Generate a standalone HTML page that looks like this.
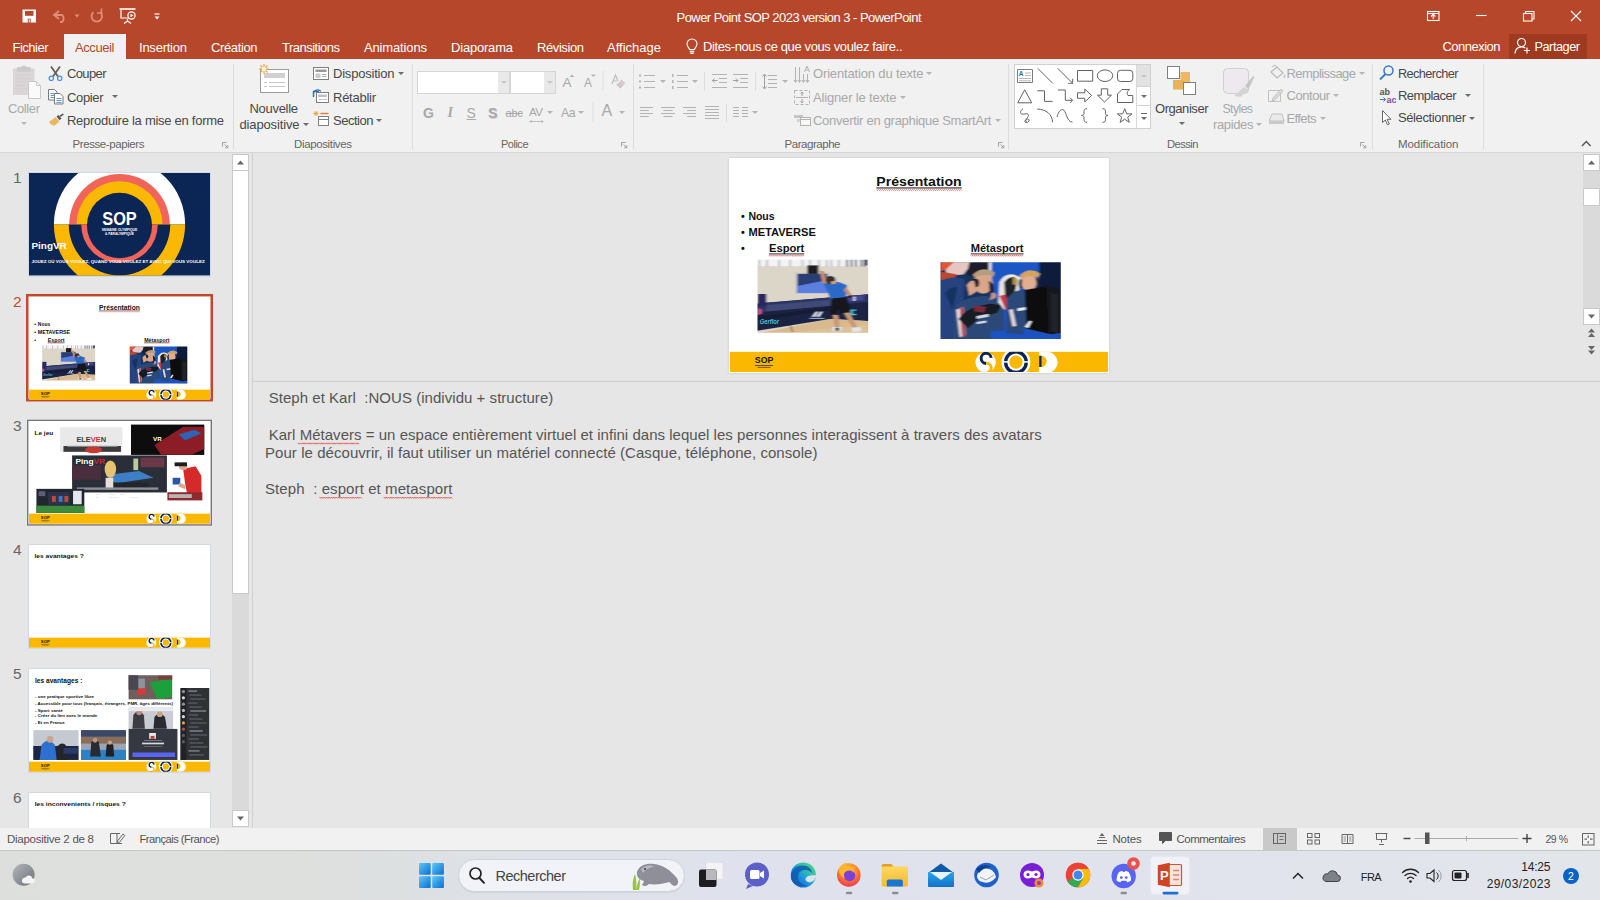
<!DOCTYPE html>
<html lang="fr">
<head>
<meta charset="utf-8">
<title>Power Point SOP 2023 version 3 - PowerPoint</title>
<style>
*{box-sizing:border-box;margin:0;padding:0}
html,body{width:1600px;height:900px;overflow:hidden;background:#e6e6e6}
body{position:relative;font-family:"Liberation Sans",sans-serif;font-size:12px;color:#444;-webkit-font-smoothing:antialiased}
.a{position:absolute;white-space:nowrap}
.t{position:absolute;white-space:nowrap;line-height:16px;height:16px}
/* ---------- title bar ---------- */
#titlebar{left:0;top:0;width:1600px;height:59px;background:#b7472a}
#titlebar .t{color:#fff}
.tab{font-size:13px;color:#fff;top:38px}
#tabsel{left:64px;top:34px;width:62px;height:26px;background:#f1f1f1}
/* ---------- ribbon ---------- */
#ribbon{left:0;top:59px;width:1600px;height:94px;background:#f1f1f1;border-bottom:1px solid #d6d6d6}
.rb{font-size:13px;color:#3b3b3b}
.rb.dis{color:#a6a6a6}
.gl{font-size:11px;color:#666}
.sep{position:absolute;top:64px;width:1px;height:86px;background:#dcdcdc}
.dd{position:absolute;width:0;height:0;border-left:3px solid transparent;border-right:3px solid transparent;border-top:3px solid #6a6a6a}
.dd.dis{border-top-color:#b5b5b5}
/* ---------- panels ---------- */
#leftpane{left:0;top:153px;width:252px;height:675px;background:#e6e6e6}
#vdiv{left:252px;top:153px;width:1px;height:675px;background:#cfcfcf}
#main{left:253px;top:153px;width:1347px;height:675px;background:#e6e6e6}
#hsplit{left:253px;top:381px;width:1347px;height:1px;background:#cdcdcd}
/* ---------- status + taskbar ---------- */
#status{left:0;top:828px;width:1600px;height:22px;background:#f1f1f1}
#status .t{font-size:11px;color:#555}
#taskbar{left:0;top:850px;width:1600px;height:50px;background:linear-gradient(90deg,#dcdfdb 0%,#dde0dc 18%,#dee1e6 30%,#dfe2ec 45%,#e0e3ec 70%,#e2e5ea 100%);border-top:1px solid #c3c7c5}
</style>
</head>
<body>
<div id="titlebar" class="a"></div>
<div id="tabsel" class="a"></div>
<div id="ribbon" class="a"></div>
<div id="leftpane" class="a"></div>
<div id="vdiv" class="a"></div>
<div id="main" class="a"></div>
<div id="hsplit" class="a"></div>
<div id="status" class="a"></div>
<div id="taskbar" class="a"></div>
<div class="a" style="left:1509px;top:34px;width:78px;height:25px;background:#9f3a21"></div>
<svg class="a" style="left:0;top:0" width="240" height="34" viewBox="0 0 240 34" fill="none" stroke="#fff" stroke-width="1.2">
<rect x="22.500" y="9.500" width="13.500" height="13" fill="#fff" stroke="none"/><rect x="25" y="11" width="8.500" height="4.800" fill="#b7472a" stroke="none"/><rect x="27.700" y="18.700" width="3" height="3.800" fill="#b7472a" stroke="none"/><rect x="28.700" y="19.500" width="1.200" height="2.200" fill="#fff" stroke="none"/>
<g stroke="#dc8f7b" stroke-width="1.8"><path d="M59 11l-5 4 5 4" /><path d="M54.5 15h7.500a4.500 4.500 0 0 1 0 7h-2"/></g>
<path d="M74.500 14.500h5l-2.500 3z" fill="#dc8f7b" stroke="none"/>
<g stroke="#dc8f7b" stroke-width="1.8"><path d="M100.200 12.200a5.300 5.300 0 1 1-6.800 0"/><path d="M101.500 8.500v4.500h-4.500" stroke-width="1.600"/></g>
<path d="M119.500 9h16" stroke-width="1.6"/><path d="M121 10v8h8"/><path d="M127.500 19v3M124 23.500l3.500-2.500 3.500 2.500"/><circle cx="131.500" cy="15.500" r="3.600" fill="#b7472a"/><path d="M130.500 13.700v3.600l3-1.800z" fill="#fff" stroke="none"/>
<path d="M154.500 14h5" stroke-width="1.200"/><path d="M154.500 16.500h5l-2.500 3z" fill="#fff" stroke="none"/>
</svg>
<svg class="a" style="left:684px;top:38px" width="16" height="18" viewBox="0 0 16 18" fill="none" stroke="#fff" stroke-width="1.1"><path d="M5.500 11.500c0-1.500-2.500-2.800-2.500-5.500a5 5 0 0 1 10 0c0 2.700-2.500 4-2.500 5.500z"/><path d="M5.800 13.500h4.400M6.300 15.300h3.400" stroke-width="1.300"/></svg>
<svg class="a" style="left:1420px;top:0" width="180" height="34" viewBox="0 0 180 34" fill="none" stroke="#fff" stroke-width="1.1">
<rect x="7.500" y="11.500" width="11.500" height="9"/><path d="M7.500 13.500h11.500" /><path d="M13.200 19v-4.500M11 16.500l2.200-2.200 2.200 2.200"/>
<path d="M56 15.500h10.500"/>
<rect x="103.500" y="13.500" width="8.500" height="7.500"/><path d="M105.500 13.500v-2h8.500v7.500h-2"/>
<path d="M151 11l10 10M161 11l-10 10"/>
</svg>
<svg class="a" style="left:1513px;top:36px" width="20" height="20" viewBox="0 0 20 20" fill="none" stroke="#fff" stroke-width="1.200"><circle cx="8.500" cy="6.500" r="4"/><path d="M1.800 17.500c.6-4 3-6.600 6.700-6.600 1.500 0 2.800.4 3.800 1.200"/><path d="M14 11.500v6M11 14.500h6"/></svg>
<div class="t" style="left:676.5px;top:9.7px;font-size:13px;letter-spacing:-0.544px;color:#fff;">Power Point SOP 2023 version 3 - PowerPoint</div>
<div class="t" style="left:12.5px;top:39.5px;font-size:13px;letter-spacing:-0.503px;color:#fff;">Fichier</div>
<div class="t" style="left:139.0px;top:39.5px;font-size:13px;letter-spacing:-0.234px;color:#fff;">Insertion</div>
<div class="t" style="left:211.0px;top:39.5px;font-size:13px;letter-spacing:-0.377px;color:#fff;">Création</div>
<div class="t" style="left:282.0px;top:39.5px;font-size:13px;letter-spacing:-0.511px;color:#fff;">Transitions</div>
<div class="t" style="left:364.0px;top:39.5px;font-size:13px;letter-spacing:-0.146px;color:#fff;">Animations</div>
<div class="t" style="left:451.0px;top:39.5px;font-size:13px;letter-spacing:-0.199px;color:#fff;">Diaporama</div>
<div class="t" style="left:537.0px;top:39.5px;font-size:13px;letter-spacing:-0.408px;color:#fff;">Révision</div>
<div class="t" style="left:607.0px;top:39.5px;font-size:13px;color:#fff;">Affichage</div>
<div class="t" style="left:75.0px;top:39.5px;font-size:13px;letter-spacing:-0.404px;color:#b7472a;">Accueil</div>
<div class="t" style="left:703.0px;top:39.3px;font-size:13px;letter-spacing:-0.380px;color:#fff;">Dites-nous ce que vous voulez faire..</div>
<div class="t" style="left:1442.5px;top:39.0px;font-size:13px;letter-spacing:-0.520px;color:#fff;">Connexion</div>
<div class="t" style="left:1534.5px;top:39.1px;font-size:12.75px;letter-spacing:-0.488px;color:#fff;">Partager</div>
<div class="sep" style="left:233px"></div>
<div class="sep" style="left:412px"></div>
<div class="sep" style="left:633px"></div>
<div class="sep" style="left:1008px"></div>
<div class="sep" style="left:1372px"></div>
<div class="sep" style="left:1483px"></div>
<div class="dd dis" style="left:21.0px;top:121.5px"></div>
<div class="dd" style="left:111.5px;top:95.0px"></div>
<div class="dd" style="left:303.0px;top:122.5px"></div>
<div class="dd" style="left:397.5px;top:72.0px"></div>
<div class="dd" style="left:376.0px;top:118.5px"></div>
<div class="dd dis" style="left:547.0px;top:110.5px"></div>
<div class="dd dis" style="left:578.0px;top:110.5px"></div>
<div class="dd dis" style="left:619.0px;top:110.5px"></div>
<div class="dd dis" style="left:659.5px;top:79.5px"></div>
<div class="dd dis" style="left:691.5px;top:79.5px"></div>
<div class="dd dis" style="left:781.5px;top:79.5px"></div>
<div class="dd dis" style="left:751.5px;top:110.5px"></div>
<div class="dd dis" style="left:926.0px;top:72.0px"></div>
<div class="dd dis" style="left:899.5px;top:95.5px"></div>
<div class="dd dis" style="left:994.5px;top:118.5px"></div>
<div class="dd" style="left:1178.5px;top:122.0px"></div>
<div class="dd dis" style="left:1256.0px;top:122.5px"></div>
<div class="dd dis" style="left:1359.0px;top:71.5px"></div>
<div class="dd dis" style="left:1333.0px;top:94.0px"></div>
<div class="dd dis" style="left:1319.5px;top:116.5px"></div>
<div class="dd" style="left:1464.5px;top:93.5px"></div>
<div class="dd" style="left:1469.0px;top:116.5px"></div>
<div class="a" style="left:417px;top:71px;width:93px;height:23px;background:#fff;border:1px solid #d5d5d5"></div>
<div class="a" style="left:498px;top:72px;width:11px;height:21px;background:#e9e9e9"></div>
<div class="a" style="left:510px;top:71px;width:46px;height:23px;background:#fff;border:1px solid #d5d5d5"></div>
<div class="a" style="left:544px;top:72px;width:11px;height:21px;background:#e9e9e9"></div>
<div class="dd dis" style="left:500.5px;top:81px;border-top-color:#c8c8c8"></div><div class="dd dis" style="left:546.5px;top:81px;border-top-color:#c8c8c8"></div>
<div class="a" style="left:1014px;top:64px;width:137px;height:65px;background:#fff;border:1px solid #d0d0d0"></div>
<div class="a" style="left:1136px;top:65px;width:14px;height:21px;background:#e2e2e2"></div>
<div class="a" style="left:1136px;top:86px;width:14px;height:1px;background:#d0d0d0"></div><div class="a" style="left:1136px;top:105px;width:14px;height:1px;background:#d0d0d0"></div><div class="a" style="left:1136px;top:65px;width:1px;height:63px;background:#d9d9d9"></div>
<div class="dd dis" style="left:1140.500px;top:74px;border-top:none;border-bottom:3px solid #c4c4c4"></div><div class="dd" style="left:1140.500px;top:94.500px"></div><div class="dd" style="left:1140.500px;top:116.500px"></div><div class="a" style="left:1140.500px;top:113px;width:6px;height:1px;background:#666"></div>
<svg class="a" style="left:0;top:59px" width="1600" height="93" viewBox="0 59 1600 93" fill="none">
<!-- Coller (disabled) -->
<path d="M13 68.500h21.500v26.500h-21.500z" fill="#dad6d7"/><path d="M17 67h13.500v4.500h-13.500z" fill="#cdc9ca"/><path d="M21.500 65.800h4.500v2.500h-4.500z" fill="#cdc9ca"/><path d="M16.500 75h14M16.500 78.500h14M16.500 82h10M16.500 85.500h10M16.500 89h10" stroke="#d0cccd" stroke-width=".8"/>
<path d="M28.500 81.500h8l4 4v13h-12z" fill="#fafafa" stroke="#c9c9c9"/><path d="M36.500 81.500v4h4" stroke="#c9c9c9"/>
<!-- Couper -->
<path d="M51 66.500l7 10M60 66.500l-7 10" stroke="#5e5e5e" stroke-width="1.700"/><circle cx="51.300" cy="78.300" r="2.200" stroke="#4b8fd6" stroke-width="1.200"/><circle cx="59.700" cy="78.300" r="2.200" stroke="#4b8fd6" stroke-width="1.200"/>
<!-- Copier -->
<path d="M48.500 89.500h6l2.500 2.500v8h-8.500z" fill="#fff" stroke="#7a7a7a"/><path d="M50.500 93.500h4M50.500 95.500h4M50.500 97.500h4" stroke="#3b78c4" stroke-width=".8"/>
<path d="M54.500 93.500h5.500l3 3v7.500h-8.500z" fill="#fff" stroke="#7a7a7a"/><path d="M56.500 98.500h5M56.500 100.500h5M56.500 102.500h5" stroke="#3b78c4" stroke-width=".8"/>
<!-- Reproduire -->
<path d="M49 122l6.500-5 4 4.500-5.500 4.500-1.500-1.500-1 .8z" fill="#e8b85c"/><path d="M56.500 116.500l2-1.500 3 3.500-2 1.700z" fill="#555"/><path d="M59.500 115.500l3.500-2 .8 1-3 2.600z" fill="#555"/>
<!-- Nouvelle diapositive -->
<rect x="260.500" y="69.500" width="28" height="23" fill="#fff" stroke="#9a9a9a"/><rect x="264" y="73" width="21" height="5" fill="#d0d0d0"/><path d="M264 82.500h3M269 82.500h16M264 86.500h3M269 86.500h16" stroke="#c6c6c6"/>
<g stroke="#eda33b" stroke-width="1.200"><path d="M264 64v10M259 69h10M260.500 65.500l7 7M267.500 65.500l-7 7"/></g><circle cx="264" cy="69" r="2.200" fill="#fff4d6"/>
<!-- Disposition -->
<rect x="313.500" y="67.500" width="15" height="12" fill="#fff" stroke="#7f7f7f"/><rect x="315.500" y="69.500" width="11" height="2.500" fill="#9a9a9a"/><rect x="315.500" y="73.500" width="5" height="4.500" fill="#c9c9c9"/><path d="M322 74.500h4.500M322 76.500h4.500" stroke="#9a9a9a" stroke-width=".8"/>
<!-- Rétablir -->
<rect x="316.500" y="92.500" width="12" height="10" fill="#fff" stroke="#7f7f7f"/><rect x="318" y="94.500" width="9" height="2.500" fill="#c2c2c2"/><path d="M319 99.500h8" stroke="#c2c2c2"/><path d="M313.500 97v-5.500h5.500" stroke="#2f6fb7" stroke-width="1.400" fill="none"/><path d="M313.800 92c2-2.500 5-2.800 7-.8" stroke="#2f6fb7" stroke-width="1.300"/>
<!-- Section -->
<g stroke="#eda33b" stroke-width="1"><path d="M316 111v5M313.500 113.500h5M314.200 111.700l3.600 3.600M317.800 111.700l-3.600 3.600"/></g>
<path d="M320.500 113.500h8" stroke="#e07c3a" stroke-width="1.4"/><rect x="318.500" y="116.500" width="10" height="9" fill="#fff" stroke="#7f7f7f"/><path d="M318.500 119.500h10" stroke="#7f7f7f"/>
<!-- A^ A˅ carets, clear format -->
<path d="M569.500 77l2.500-2.500 2.500 2.500z" fill="#b4b4b4"/><path d="M590.800 74.500l2.500 2.500 2.500-2.500z" fill="#b4b4b4"/>
<path d="M603 71v20M593 102v20" stroke="#dcdcdc"/>
<path d="M612 84l3.500-9 2.500 6M613.300 81h3.500" stroke="#b9b9b9" stroke-width="1.100"/><path d="M616.500 85l5-5.500 4 3.500-5 5.500z" fill="#d9c9cf"/><path d="M616.500 85l2-2.200 4 3.500-2 2.200z" fill="#c9c9c9"/>
<path d="M530 121.500h13M531.500 120l-1.500 1.500 1.500 1.500M541.500 120l1.500 1.500-1.500 1.500" stroke="#b4b4b4" stroke-width=".9"/>
<!-- bullets / numbering -->
<g stroke="#b3b3b3"><path d="M644 75.500h11M644 81.500h11M644 87.500h11"/><path d="M677 75.500h11M677 81.500h11M677 87.500h11"/></g>
<g fill="#b3b3b3"><rect x="639" y="74.500" width="2" height="2"/><rect x="639" y="80.500" width="2" height="2"/><rect x="639" y="86.500" width="2" height="2"/><rect x="672" y="74" width="1.500" height="3"/><rect x="672" y="80" width="1.500" height="3"/><rect x="672" y="86" width="1.500" height="3"/></g>
<path d="M704.500 72v19M755.500 72v19M726.500 104v18" stroke="#dcdcdc"/>
<!-- indents -->
<g stroke="#b3b3b3"><path d="M712 74.500h15M719 78.500h8M719 82.500h8M712 87.500h15"/><path d="M733 74.500h15M740 78.500h8M740 82.500h8M733 87.500h15"/><path d="M717.500 80.500h-5M714.500 78.500l-2 2 2 2" stroke="#a0a0a0"/><path d="M733 80.500h5M736 78.500l2 2-2 2" stroke="#a0a0a0"/></g>
<!-- line spacing -->
<g stroke="#b3b3b3"><path d="M768 75.500h9M768 79.500h9M768 83.500h9M768 87.500h9"/><path d="M764.500 74v15M762.500 76.500l2-2.500 2 2.500M762.500 86.500l2 2.500 2-2.500" stroke="#a0a0a0"/></g>
<!-- alignment -->
<g stroke="#b3b3b3"><path d="M640 107.500h13M640 110.500h9M640 113.500h13M640 116.500h9"/><path d="M661 107.500h14M663.500 110.500h9M661 113.500h14M663.500 116.500h9"/><path d="M683 107.500h13M687 110.500h9M683 113.500h13M687 116.500h9"/><path d="M705 106.500h14M705 109.500h14M705 112.500h14M705 115.500h14M705 118.500h14"/><path d="M733 107.500h6M742 107.500h6M733 110.500h6M742 110.500h6M733 113.500h6M742 113.500h6M733 116.500h6M742 116.500h6"/></g>
<!-- orientation / align text / smartart icons -->
<g stroke="#b3b3b3"><path d="M795.500 67v15M799.500 67v15M794 80l1.500 2.500 1.500-2.500M798 80l1.500 2.500 1.500-2.500"/><path d="M804.500 72l2.500-6 2.500 6M805.500 70h3M803.500 74v8M807.500 74v8M806 80l1.500 2.500 1.500-2.500M802 80l1.500 2.500 1.500-2.500"/></g>
<g stroke="#b3b3b3"><rect x="794.500" y="90.500" width="15" height="14" stroke-dasharray="3 2"/><path d="M796 97.500h12"/><path d="M802 92v4M800.500 93.500l1.500-1.500 1.500 1.500M802 99v4M800.500 101.500l1.500 1.500 1.500-1.500" stroke="#a0a0a0"/></g>
<path d="M794 115h9v3h-9z" fill="#c6c6c6"/><path d="M797 119h7v3h-7z" fill="#d4d4d4"/><rect x="800.500" y="117.500" width="10" height="8" fill="#f7f7f7" stroke="#b3b3b3"/><path d="M800.500 119.500h10" stroke="#b3b3b3"/>
<!-- shapes gallery icons -->
<g stroke="#636363" stroke-width="1" stroke-linejoin="round">
<rect x="1017.500" y="69.500" width="15" height="13" fill="#fff" stroke="#7d7d7d"/><path d="M1025 73h6M1025 75.500h6M1019 78.500h12M1019 80.800h12" stroke="#9a9a9a" stroke-width=".7"/>
<path d="M1037.700 68.300l15 15"/><path d="M1057.700 68.300l15 15M1072.700 83.300v-4.500M1072.700 83.300h-4.500"/>
<rect x="1077.500" y="70.500" width="15.200" height="10.700"/><ellipse cx="1105" cy="75.700" rx="7.700" ry="5.800"/><rect x="1117.500" y="70.300" width="15.300" height="11.200" rx="3"/>
<path d="M1024.700 89.800l7 13h-14z"/><path d="M1037.300 90.800h7.200v10.600h8.100"/><path d="M1058 90h7.300v10.300h7M1072.600 100.300l-2.600-2.600M1072.600 100.300l-2.600 2.600"/>
<path d="M1077.500 92.800h7.300v-3.800l6.800 6.500-6.800 6.500v-3.700h-7.300z"/><path d="M1101.300 88.800h6.400v6.400h3.800l-7 6.800-7-6.800h3.800z"/>
<path d="M1117.500 94l4.500-4.500h7.500c-2.500 1.500-3 4-1.500 6h4.800v7h-15.300z"/>
<path d="M1023 108.700c-2.500 2-3.500 4-1.500 5.200s5-1.200 6.500.3-1.500 4.500-2.800 6.300 1.300 2.800 3 1.500 1-3.200-.7-3-2.500 2.500-.5 3.700"/>
<path d="M1037.200 109c9 .5 15 5 15.400 13.300"/><path d="M1057 117c1-4 3-7.500 5.500-7.500 4 0 3.500 12.500 10 12.500"/>
<path d="M1087 108.700c-2.500 0-3 1-3 3v1.800c0 1.200-.8 2-2.500 2 1.700 0 2.500.8 2.500 2v1.800c0 2 .5 3 3 3"/><path d="M1102.500 108.700c2.500 0 3 1 3 3v1.800c0 1.200.8 2 2.500 2-1.700 0-2.500.8-2.500 2v1.800c0 2-.5 3-3 3"/>
<path d="M1124.700 108.700l2 5.200h5.300l-4.300 3.300 1.600 5.200-4.600-3.200-4.600 3.200 1.600-5.200-4.300-3.300h5.300z"/>
</g>
<text x="1018.700" y="76.300" font-family="Liberation Sans, sans-serif" font-size="6.500" font-weight="700" fill="#3b62b0">A</text>
<!-- Organiser -->
<rect x="1180.500" y="72" width="9.500" height="10" fill="#ecba62"/><rect x="1173" y="80" width="11" height="9.500" fill="#e9b355"/><rect x="1167.500" y="66.500" width="12" height="12" fill="#fff" stroke="#7f7f7f"/><rect x="1183.500" y="82.500" width="12" height="12" fill="#fff" stroke="#7f7f7f"/>
<!-- Styles rapides (disabled) -->
<rect x="1223.500" y="68.500" width="25" height="25" rx="4" fill="#ede9ee" stroke="#cfcfcf"/><path d="M1234 96l10-9 5 3-9 7z" fill="#d3d3d3"/><path d="M1245 86l8-10 1.500 1-6 12z" fill="#c6c6c6"/>
<!-- Remplissage / Contour / Effets icons -->
<path d="M1271 72l6-5 6 6-6 5z" stroke="#b9b9b9" stroke-width="1.200"/><path d="M1272 67l3-2 2 2" stroke="#b9b9b9"/><path d="M1284.500 74c-1.500 2-1.500 4 0 4s1.500-2 0-4z" fill="#c9c9c9"/>
<path d="M1268.500 90.500h12v11h-12z" stroke="#c2c2c2"/><path d="M1273 98l8-9 2 2-8 9-3 1z" fill="#dadada" stroke="#b9b9b9" stroke-width=".8"/>
<path d="M1269 121l3-7h10l2 7z" fill="#e9e9e9" stroke="#c0c0c0"/><path d="M1269 121h15v3h-15z" fill="#c9c9c9"/>
<!-- Rechercher / Remplacer / Sélectionner icons -->
<circle cx="1388.500" cy="70.500" r="4.500" stroke="#3b78c4" stroke-width="1.500"/><path d="M1385.500 74l-5.500 5.500" stroke="#3b78c4" stroke-width="1.800"/>
<path d="M1382.500 110.500v12l2.800-2.500 2.200 4.800 1.800-.800-2.200-4.700h3.800z" fill="#fff" stroke="#555" stroke-width=".9"/>
<path d="M1380 99.500h5.500M1383.500 97.500l2 2-2 2" stroke="#3b78c4" stroke-width="1"/>
<text x="1379.500" y="95" font-family="Liberation Sans, sans-serif" font-size="9" font-weight="700" fill="#555">ab</text>
<text x="1386.500" y="103" font-family="Liberation Sans, sans-serif" font-size="9" font-weight="700" fill="#8a4a9e">ac</text>
<!-- launchers -->
<g stroke="#9a9a9a" stroke-width=".9"><path d="M222.500 146.500v-4h4M224.500 144.500l3 3M227.800 145.200v2.600h-2.600"/><path d="M621.500 146.500v-4h4M623.500 144.500l3 3M626.800 145.200v2.600h-2.600"/><path d="M998.500 146.500v-4h4M1000.500 144.500l3 3M1003.800 145.200v2.600h-2.600"/><path d="M1360.500 146.500v-4h4M1362.500 144.500l3 3M1365.800 145.200v2.600h-2.600"/></g>
<path d="M1582 146l4.300-4.500 4.300 4.500" stroke="#555" stroke-width="1.400"/>
</svg>

<div class="t" style="left:8.0px;top:100.9px;font-size:13px;letter-spacing:-0.394px;color:#a8a8a8;">Coller</div>
<div class="t" style="left:67.0px;top:66.3px;font-size:13px;letter-spacing:-0.628px;color:#484848;">Couper</div>
<div class="t" style="left:67.0px;top:89.5px;font-size:13px;letter-spacing:-0.359px;color:#484848;">Copier</div>
<div class="t" style="left:67.0px;top:112.8px;font-size:13px;letter-spacing:-0.270px;color:#484848;">Reproduire la mise en forme</div>
<div class="t" style="left:72.5px;top:135.8px;font-size:11.5px;letter-spacing:-0.411px;color:#666;">Presse-papiers</div>
<div class="t" style="left:249.5px;top:100.9px;font-size:13px;letter-spacing:-0.299px;color:#484848;">Nouvelle</div>
<div class="t" style="left:239.5px;top:117.2px;font-size:13px;letter-spacing:-0.144px;color:#484848;">diapositive</div>
<div class="t" style="left:333.0px;top:66.3px;font-size:13px;letter-spacing:-0.209px;color:#484848;">Disposition</div>
<div class="t" style="left:333.0px;top:89.5px;font-size:13px;letter-spacing:-0.257px;color:#484848;">Rétablir</div>
<div class="t" style="left:333.0px;top:112.8px;font-size:13px;letter-spacing:-0.479px;color:#484848;">Section</div>
<div class="t" style="left:294.0px;top:135.8px;font-size:11.5px;letter-spacing:-0.364px;color:#666;">Diapositives</div>
<div class="t" style="left:501.0px;top:136.0px;font-size:11px;letter-spacing:-0.493px;color:#666;">Police</div>
<div class="t" style="left:813.0px;top:66.3px;font-size:13px;letter-spacing:-0.156px;color:#a8a8a8;">Orientation du texte</div>
<div class="t" style="left:813.0px;top:89.8px;font-size:13px;letter-spacing:-0.167px;color:#a8a8a8;">Aligner le texte</div>
<div class="t" style="left:813.0px;top:112.6px;font-size:13px;letter-spacing:-0.289px;color:#a8a8a8;">Convertir en graphique SmartArt</div>
<div class="t" style="left:784.5px;top:135.8px;font-size:11.5px;letter-spacing:-0.457px;color:#666;">Paragraphe</div>
<div class="t" style="left:1155.0px;top:100.9px;font-size:13px;letter-spacing:-0.447px;color:#484848;">Organiser</div>
<div class="t" style="left:1222.5px;top:101.2px;font-size:12.25px;letter-spacing:-0.573px;color:#a8a8a8;">Styles</div>
<div class="t" style="left:1213.0px;top:117.2px;font-size:13px;letter-spacing:-0.357px;color:#a8a8a8;">rapides</div>
<div class="t" style="left:1286.5px;top:65.8px;font-size:13px;letter-spacing:-0.566px;color:#a8a8a8;">Remplissage</div>
<div class="t" style="left:1286.5px;top:88.4px;font-size:13px;letter-spacing:-0.458px;color:#a8a8a8;">Contour</div>
<div class="t" style="left:1286.5px;top:111.0px;font-size:13px;letter-spacing:-0.603px;color:#a8a8a8;">Effets</div>
<div class="t" style="left:1167.0px;top:135.9px;font-size:11.25px;letter-spacing:-0.578px;color:#666;">Dessin</div>
<div class="t" style="left:1398.0px;top:65.7px;font-size:12.75px;letter-spacing:-0.601px;color:#484848;">Rechercher</div>
<div class="t" style="left:1398.0px;top:87.7px;font-size:13px;letter-spacing:-0.545px;color:#484848;">Remplacer</div>
<div class="t" style="left:1398.0px;top:110.4px;font-size:13px;letter-spacing:-0.389px;color:#484848;">Sélectionner</div>
<div class="t" style="left:1398.0px;top:135.8px;font-size:11.5px;letter-spacing:-0.080px;color:#666;">Modification</div>
<div class="t" style="left:423.0px;top:104.6px;font-size:14px;color:#a8a8a8;font-weight:700;">G</div>
<div class="t" style="left:447.5px;top:104.6px;font-size:14px;color:#a8a8a8;font-weight:700;font-style:italic;font-family:'Liberation Serif',serif;">I</div>
<div class="t" style="left:466.5px;top:104.6px;font-size:14px;color:#a8a8a8;text-decoration:underline;">S</div>
<div class="t" style="left:488.0px;top:104.6px;font-size:14px;color:#a8a8a8;font-weight:700;text-shadow:1px 1px 0 #d0d0d0;">S</div>
<div class="t" style="left:505.5px;top:104.7px;font-size:11px;letter-spacing:-0.125px;color:#a8a8a8;text-decoration:line-through;">abc</div>
<div class="t" style="left:529.0px;top:103.5px;font-size:11.5px;letter-spacing:-0.495px;color:#a8a8a8;">AV</div>
<div class="t" style="left:561.0px;top:105.3px;font-size:12.25px;letter-spacing:-0.489px;color:#a8a8a8;">Aa</div>
<div class="t" style="left:601.5px;top:103.0px;font-size:16px;color:#a8a8a8;">A</div>
<div class="t" style="left:562.5px;top:74.8px;font-size:13.5px;color:#a8a8a8;">A</div>
<div class="t" style="left:584.0px;top:75.3px;font-size:12px;color:#a8a8a8;">A</div>
<svg width="0" height="0" style="position:absolute"><defs><filter id="bl" x="-2%" y="-2%" width="104%" height="104%"><feGaussianBlur stdDeviation=".5"/></filter><filter id="bl2" x="-2%" y="-2%" width="104%" height="104%"><feGaussianBlur stdDeviation=".9"/></filter><clipPath id="ctop"><rect x="0" y="0" width="378" height="107"/></clipPath><clipPath id="cbar"><rect x="0" y="192.500" width="378" height="21"/></clipPath><clipPath id="cbot"><rect x="0" y="107" width="378" height="106"/></clipPath></defs></svg>
<div class="a" style="left:232px;top:154px;width:17px;height:672px;background:#dadada"></div>
<div class="a" style="left:232px;top:154px;width:17px;height:17px;background:#fff;border:1px solid #c9c9c9"></div>
<div class="a" style="left:232px;top:170px;width:17px;height:424px;background:#fff;border:1px solid #c9c9c9"></div>
<div class="a" style="left:232px;top:810px;width:17px;height:17px;background:#fff;border:1px solid #c9c9c9"></div>
<svg class="a" style="left:232px;top:154px" width="17" height="673" viewBox="0 0 17 673"><path d="M5 10.500l3.500-4 3.500 4z" fill="#666"/><path d="M5 662.500l3.500 4 3.500-4z" fill="#666"/></svg>
<div class="a" style="left:28px;top:172px;width:183px;height:104.5px;background:#fff;border:1px solid #d3d9e4"></div>
<svg class="a" style="left:29px;top:173px;" width="181" height="102.5" viewBox="0 0 378 213" preserveAspectRatio="none"><rect width="378" height="213" fill="#0b2555"/><g clip-path="url(#ctop)"><circle cx="189" cy="107" r="137" fill="#fff"/><circle cx="189" cy="107" r="105" fill="#f0645a"/><circle cx="189" cy="107" r="90" fill="#fbb800"/></g><g clip-path="url(#cbot)"><circle cx="189" cy="107" r="137" fill="#fbb800"/><circle cx="189" cy="107" r="106" fill="#0b2555"/><circle cx="189" cy="107" r="80" fill="#f0645a"/></g><circle cx="189" cy="109" r="68" fill="#0b2555"/><text x="189" y="108" font-family="Liberation Sans, sans-serif" font-size="38" font-weight="700" fill="#fff" text-anchor="middle" textLength="72" lengthAdjust="spacingAndGlyphs">SOP</text><text x="189" y="120.500" font-family="Liberation Sans, sans-serif" font-size="6.200" font-weight="700" fill="#fff" text-anchor="middle" textLength="74" lengthAdjust="spacingAndGlyphs">SEMAINE OLYMPIQUE</text><text x="189" y="129" font-family="Liberation Sans, sans-serif" font-size="6.200" font-weight="700" fill="#fff" text-anchor="middle" textLength="60" lengthAdjust="spacingAndGlyphs">&amp; PARALYMPIQUE</text><text x="5" y="158.500" font-family="Liberation Sans, sans-serif" font-size="19" font-weight="700" fill="#fff" textLength="74" lengthAdjust="spacingAndGlyphs">PingVR</text><text x="5" y="186.500" font-family="Liberation Sans, sans-serif" font-size="8.200" font-weight="700" fill="#fff" textLength="362" lengthAdjust="spacingAndGlyphs">JOUEZ OÙ VOUS VOULEZ, QUAND VOUS VOULEZ ET AVEC QUI VOUS VOULEZ</text></svg>
<svg class="a" style="left:20px;top:290px" width="200" height="116" viewBox="20 290 200 116"><rect x="27.250" y="295.200" width="184.500" height="105" fill="#fff" stroke="#c24a2a" stroke-width="2.500"/></svg>
<svg class="a" style="left:29px;top:297px;" width="181" height="102.5" viewBox="0 0 378 213" preserveAspectRatio="none"><rect width="378" height="213" fill="#fff"/><text x="146.300" y="27" font-family="Liberation Sans, sans-serif" font-size="13.400" font-weight="700" fill="#111" textLength="85.300" lengthAdjust="spacingAndGlyphs">Présentation</text><rect x="146.300" y="28.400" width="85.300" height="1" fill="#111"/><polyline points="146.3 30.5 147.3 31.5 148.3 30.5 149.3 31.5 150.3 30.5 151.3 31.5 152.3 30.5 153.3 31.5 154.3 30.5 155.3 31.5 156.3 30.5 157.3 31.5 158.3 30.5 159.3 31.5 160.3 30.5 161.3 31.5 162.3 30.5 163.3 31.5 164.3 30.5 165.3 31.5 166.3 30.5 167.3 31.5 168.3 30.5 169.3 31.5 170.3 30.5 171.3 31.5 172.3 30.5 173.3 31.5 174.3 30.5 175.3 31.5 176.3 30.5 177.3 31.5 178.3 30.5 179.3 31.5 180.3 30.5 181.3 31.5 182.3 30.5 183.3 31.5 184.3 30.5 185.3 31.5 186.3 30.5 187.3 31.5 188.3 30.5 189.3 31.5 190.3 30.5 191.3 31.5 192.3 30.5 193.3 31.5 194.3 30.5 195.3 31.5 196.3 30.5 197.3 31.5 198.3 30.5 199.3 31.5 200.3 30.5 201.3 31.5 202.3 30.5 203.3 31.5 204.3 30.5 205.3 31.5 206.3 30.5 207.3 31.5 208.3 30.5 209.3 31.5 210.3 30.5 211.3 31.5 212.3 30.5 213.3 31.5 214.3 30.5 215.3 31.5 216.3 30.5 217.3 31.5 218.3 30.5 219.3 31.5 220.3 30.5 221.3 31.5 222.3 30.5 223.3 31.5 224.3 30.5 225.3 31.5 226.3 30.5 227.3 31.5 228.3 30.5 229.3 31.5 230.3 30.5 231.3 31.5" fill="none" stroke="#e8413a" stroke-width="0.7"/><text x="11" y="60.800" font-family="Liberation Sans, sans-serif" font-size="10.700" font-weight="700" fill="#111">•</text><text x="18.400" y="60.800" font-family="Liberation Sans, sans-serif" font-size="10.700" font-weight="700" fill="#111" textLength="26.200" lengthAdjust="spacingAndGlyphs">Nous</text><text x="11" y="77" font-family="Liberation Sans, sans-serif" font-size="10.700" font-weight="700" fill="#111">•</text><text x="18.400" y="77" font-family="Liberation Sans, sans-serif" font-size="10.700" font-weight="700" fill="#111" textLength="67.400" lengthAdjust="spacingAndGlyphs">METAVERSE</text><text x="11" y="93" font-family="Liberation Sans, sans-serif" font-size="10.700" font-weight="700" fill="#111">•</text><text x="39" y="93" font-family="Liberation Sans, sans-serif" font-size="10.700" font-weight="700" fill="#111" textLength="35.300" lengthAdjust="spacingAndGlyphs">Esport</text><rect x="39" y="94.300" width="35.300" height=".9" fill="#111"/><polyline points="39.0 96.1 40.0 97.1 41.0 96.1 42.0 97.1 43.0 96.1 44.0 97.1 45.0 96.1 46.0 97.1 47.0 96.1 48.0 97.1 49.0 96.1 50.0 97.1 51.0 96.1 52.0 97.1 53.0 96.1 54.0 97.1 55.0 96.1 56.0 97.1 57.0 96.1 58.0 97.1 59.0 96.1 60.0 97.1 61.0 96.1 62.0 97.1 63.0 96.1 64.0 97.1 65.0 96.1 66.0 97.1 67.0 96.1 68.0 97.1 69.0 96.1 70.0 97.1 71.0 96.1 72.0 97.1 73.0 96.1 74.0 97.1" fill="none" stroke="#e8413a" stroke-width="0.7"/><text x="240.600" y="93" font-family="Liberation Sans, sans-serif" font-size="10.700" font-weight="700" fill="#111" textLength="52.800" lengthAdjust="spacingAndGlyphs">Métasport</text><rect x="240.600" y="94.300" width="52.800" height=".9" fill="#111"/><polyline points="240.6 96.1 241.6 97.1 242.6 96.1 243.6 97.1 244.6 96.1 245.6 97.1 246.6 96.1 247.6 97.1 248.6 96.1 249.6 97.1 250.6 96.1 251.6 97.1 252.6 96.1 253.6 97.1 254.6 96.1 255.6 97.1 256.6 96.1 257.6 97.1 258.6 96.1 259.6 97.1 260.6 96.1 261.6 97.1 262.6 96.1 263.6 97.1 264.6 96.1 265.6 97.1 266.6 96.1 267.6 97.1 268.6 96.1 269.6 97.1 270.6 96.1 271.6 97.1 272.6 96.1 273.6 97.1 274.6 96.1 275.6 97.1 276.6 96.1 277.6 97.1 278.6 96.1 279.6 97.1 280.6 96.1 281.6 97.1 282.6 96.1 283.6 97.1 284.6 96.1 285.6 97.1 286.6 96.1 287.6 97.1 288.6 96.1 289.6 97.1 290.6 96.1 291.6 97.1 292.6 96.1" fill="none" stroke="#e8413a" stroke-width="0.7"/><svg x="27.5" y="100.4" width="110.6" height="73.1" viewBox="0 0 100 100" preserveAspectRatio="none"><g filter="url(#bl2)"><rect x="-6" y="-6" width="112" height="112" fill="#dcd6c8"/><rect x="-6" y="-6" width="112" height="15" fill="#f3f3f5"/><rect x="1" y="0" width="1.2" height="9.500" fill="#a7abb3"/><rect x="8" y="0" width="1.2" height="9.500" fill="#a7abb3"/><rect x="19" y="0" width="1.2" height="9.500" fill="#a7abb3"/><rect x="29" y="0" width="1.2" height="9.500" fill="#a7abb3"/><rect x="40" y="0" width="1.2" height="9.500" fill="#a7abb3"/><rect x="47" y="0" width="1.2" height="9.500" fill="#a7abb3"/><rect x="55" y="0" width="1.2" height="9.500" fill="#a7abb3"/><rect x="62" y="0" width="1.2" height="9.500" fill="#a7abb3"/><rect x="66" y="0" width="1.2" height="9.500" fill="#a7abb3"/><rect x="73" y="0" width="1.2" height="9.500" fill="#a7abb3"/><rect x="80" y="0" width="1.8" height="9.500" fill="#6f7480"/><rect x="84" y="0" width="1.8" height="9.500" fill="#6f7480"/><rect x="88" y="0" width="1.8" height="9.500" fill="#6f7480"/><rect x="93" y="0" width="1.8" height="9.500" fill="#6f7480"/><rect x="96" y="0" width="1.8" height="9.500" fill="#6f7480"/><rect x="97" y="0" width="2.500" height="8" fill="#2b2d35"/><rect x="33.800" y="18" width="31" height="29" fill="#c9c9cb"/><rect x="36" y="19.500" width="27" height="26" fill="#2b3d74"/><path d="M36 36l27-8v17.500h-27z" fill="#5a7fe0"/><rect x="45" y="8" width="10" height="11.500" fill="#1b1c24"/><path d="M-6 60.700L106 46.700V84.500L66 81L-6 98.500z" fill="#1a2142"/><path d="M0 60L100 47.500V58L0 72z" fill="#2c3566"/><path d="M8 62l58-7v8l-58 8z" fill="#3f4877"/><rect x="0" y="47" width="8" height="16" fill="#2a2560"/><path d="M0 66l4 2v6l-4 2z" fill="#c64b8c"/><path d="M80 50.500l16-2v7l-16 2z" fill="#454690"/><rect x="86.500" y="50.500" width="2" height="6" fill="#d9d9ee"/><path d="M0 78l66-13v4l-66 14z" fill="#141a33"/><path d="M-6 103L66 81l40 3.500v22h-112z" fill="#d8ba8e"/><path d="M30 100L100 88v12z" fill="#dcc19a"/><path d="M29 88l3 11" stroke="#33261e" stroke-width=".8"/><path d="M49 78l4-7h2l-3 7zM53 78l4-7h2l-3 7z" fill="#e6ecf5"/><rect x="47" y="79.500" width="13" height="1.500" fill="#8fb5d6"/><path d="M84 68h5v2h-3v4h3v2h-5z" fill="#59c4dc"/><path d="M60 33q6-5 14-2l7 4 -1 18-14 2-3-12z" fill="#2a69c6"/><path d="M56 15l4 1 3 16-4 1z" fill="#c48d6c"/><ellipse cx="66" cy="28" rx="4.500" ry="5.500" fill="#3a2f2c"/><path d="M66 30l4-1 1 4-4 1z" fill="#d0a080"/><path d="M80 37l5 11-2 3-5-9z" fill="#c48d6c"/><rect x="82" y="49" width="3" height="3" fill="#1c1c22"/><path d="M67 53l14-2 3 22-9 1-2-8-3 10-4-1z" fill="#14151b"/><path d="M68 75l5 1 1 16-4 0z" fill="#c99874"/><path d="M78 73l5-1 7 20-4 1z" fill="#c99874"/><path d="M68 92h8v5l-8 1z" fill="#ececf2"/><path d="M85 93l8-1 1 6-8 1z" fill="#e4e6ee"/><rect x="70" y="93" width="4" height="4" fill="#555a66"/></g></svg><text x="29.712" y="165.094" font-family="Liberation Sans, sans-serif" font-size="6.9445" font-weight="700" font-style="italic" fill="#4fc0dc" textLength="19.355" lengthAdjust="spacingAndGlyphs">Gerflor</text><svg x="210.4" y="103.1" width="120.2" height="76.5" viewBox="0 0 100 100" preserveAspectRatio="none"><g filter="url(#bl2)"><rect x="-6" y="-6" width="112" height="112" fill="#16305f"/><rect x="42" y="-6" width="42" height="112" fill="#1b55c4"/><rect x="82" y="-6" width="24" height="46" fill="#0d1b3c"/><path d="M0 0h12l-6 8-6 4z" fill="#e1562b"/><path d="M11 0h16l-8 16-13 2-2-8z" fill="#e7c6c2"/><path d="M0 12l14 4-6 10-8 2z" fill="#b9482e"/><path d="M24 0h17v18l-10 4-9-6z" fill="#1b1e29"/><rect x="40" y="0" width="2.500" height="30" fill="#e4e6ea"/><path d="M-6 28q16-12 26-6l-2 84H-6z" fill="#25437f"/><path d="M4 40q4-8 10-8l-4 30z" fill="#16305f"/><path d="M12 58q8-14 26-14l14 6 2 50H10z" fill="#2a4879"/><path d="M13 62l6-4 2 36-5 4z" fill="#e9dde2"/><path d="M16 60l3-2 2 38-3 2z" fill="#b14a58"/><ellipse cx="35.500" cy="27" rx="8" ry="14" fill="#d9a68b"/><path d="M27 16q8-12 18-3l-1 6q-8-5-16 1z" fill="#b79d80"/><ellipse cx="29" cy="27" rx="3.200" ry="5.500" fill="#1b1c22"/><path d="M22 30q3-8 6-6l2 14-6 6z" fill="#d9a68b"/><path d="M43 38q4 2 3 8l-5 4z" fill="#c9967c"/><path d="M40 24q6 4 4 16l-3-2z" fill="#1b1c22"/><path d="M15 74q4-10 14-16l12-4 10 2-4 10-14 6-10 14z" fill="#191a22"/><path d="M28 56l10 2-2 8-8-2z" fill="#7a2c3c"/><path d="M30 70l10-3v4l-10 3zM30 78l8-2v3l-8 2z" fill="#d5dae6"/><path d="M49 26q4-12 12-10l6 4-4 36-10 6-5-10z" fill="#ebe6e2"/><path d="M53 26q4-8 9-6l2 4-4 28-6 2z" fill="#1f2027"/><path d="M60 20l4 2-1 8-3-1z" fill="#b8923c"/><path d="M49 44l5 18 4-2-4-18z" fill="#c9364a"/><path d="M55 48q6-14 18-12l2 50-20 4z" fill="#2a4879"/><path d="M64 60l8-2v4l-8 2z" fill="#e6eaf2"/><path d="M57 62l3 22 3-1-3-22z" fill="#ead9dc"/><ellipse cx="73.500" cy="26" rx="6.500" ry="11" fill="#e2ae90"/><path d="M66 17q8-12 17-2l-2 5q-7-4-14 1z" fill="#d6a45c"/><path d="M80 20q4 6 2 16l-3 0q2-8 0-14z" fill="#1f2027"/><path d="M66 22q-2 6 0 12l2-1q-1-5 0-10z" fill="#1f2027"/><path d="M70 36l16-4 6 4 0 60-20 2z" fill="#0b0c11"/><path d="M88 30l18 9v67H90z" fill="#15161d"/><path d="M92 40l6 2v50l-6-2z" fill="#23242c"/><path d="M42 90l28-4 22 8 8-2v8H42z" fill="#1d52c0"/><path d="M56 86l14 2-2 6-14-2z" fill="#2a4879"/><path d="M70 84l4-8 2 1-3 9z" fill="#e6eaf2"/></g></svg><rect x="0" y="192.500" width="378" height="21" fill="#fbb800"/><text x="24.800" y="203.800" font-family="Liberation Sans, sans-serif" font-size="8.600" font-weight="700" fill="#111" textLength="18.500" lengthAdjust="spacingAndGlyphs">SOP</text><rect x="25" y="205.600" width="18" height="1" fill="#333" opacity=".8"/><rect x="27.500" y="207.500" width="13" height=".9" fill="#333" opacity=".8"/><g clip-path="url(#cbar)"><circle cx="255.500" cy="203" r="10.200" fill="#fff"/><path d="M261 198.500a5 5 0 1 0-5 5.500" fill="none" stroke="#0b2555" stroke-width="3"/><path d="M256 204a4.500 4.500 0 0 1 1 9" fill="none" stroke="#fbb800" stroke-width="3"/><path d="M251 213.500h6" stroke="#f0645a" stroke-width="2"/><circle cx="285.800" cy="202.800" r="14.400" fill="#fff"/><circle cx="285.800" cy="202.800" r="12" fill="#0b2555"/><circle cx="285.800" cy="202.800" r="8.600" fill="#fff"/><circle cx="285.800" cy="202.800" r="6.600" fill="#fbb800"/><rect x="272" y="201.800" width="6" height="1.500" fill="#fff"/><rect x="293.500" y="201.800" width="6" height="1.500" fill="#fff"/><path d="M309 192.500h8a10.500 10.500 0 0 1 0 21h-8z" fill="#fff"/><path d="M311.500 196.500a5 5.500 0 0 1 0 11z" fill="#fbb800"/><path d="M309 196.500h2.500v11h-2.500z" fill="#0b2555"/></g></svg>
<svg class="a" style="left:20px;top:415px" width="200" height="116" viewBox="20 415 200 116"><rect x="27.700" y="420.400" width="183.600" height="104.500" fill="#fff" stroke="#777" stroke-width="1.400"/></svg>
<svg class="a" style="left:29px;top:421px;" width="181" height="102.5" viewBox="0 0 378 213" preserveAspectRatio="none"><rect width="378" height="213" fill="#fff"/><text x="11.500" y="29.500" font-family="Liberation Sans, sans-serif" font-size="12.500" font-weight="700" fill="#111" textLength="39" lengthAdjust="spacingAndGlyphs">Le jeu</text><g filter="url(#bl)"><rect x="65" y="13" width="130" height="51" fill="#e9e9e9"/><rect x="72" y="52" width="120" height="12" fill="#3a3a3c"/><rect x="80" y="50" width="105" height="3" fill="#d6d6d6"/><ellipse cx="135" cy="60" rx="18" ry="7" fill="#c7392f"/></g><text x="130" y="44" font-family="Liberation Sans, sans-serif" font-size="15" font-weight="700" fill="#3c3c3c" text-anchor="middle" textLength="62" lengthAdjust="spacingAndGlyphs">ELE<tspan fill="#cf2e2e">VE</tspan>N</text><g filter="url(#bl)"><rect x="213" y="7.500" width="153" height="63" fill="#0b0b0d"/><path d="M262 50l60-38h44v46l-26 12h-64z" fill="#8c1f26"/><path d="M312 28l34-10 14 8-34 14z" fill="#2f62b5"/></g><text x="259" y="42" font-family="Liberation Sans, sans-serif" font-size="13" font-weight="700" fill="#fff">VR</text><g filter="url(#bl)"><rect x="90" y="71.500" width="198" height="77" fill="#2b2e38"/><rect x="90" y="92" width="60" height="30" fill="#4a2f3e"/><rect x="233" y="76" width="50" height="20" fill="#6b3848"/><path d="M160 112l70-8 30 14-80 12z" fill="#3d7fc6"/><path d="M170 128h80v16h-80z" fill="#23252c"/><ellipse cx="170" cy="100" rx="12" ry="18" fill="#e5c36f"/><path d="M160 118h16v24h-16z" fill="#e8e0d8"/><rect x="218" y="78" width="10" height="24" fill="#b9c9a0"/><rect x="100" y="138" width="170" height="5" fill="#8d8f98"/></g><text x="97" y="90" font-family="Liberation Sans, sans-serif" font-size="15" font-weight="700" fill="#fff" textLength="62" lengthAdjust="spacingAndGlyphs">Ping<tspan fill="#d3262b">VR</tspan></text><g filter="url(#bl)"><rect x="289" y="83" width="73" height="82" fill="#fff"/><path d="M322 100l26-6 12 20 0 36h-30l-4-20z" fill="#d42b2b"/><ellipse cx="322" cy="94" rx="9" ry="8" fill="#d9a98c"/><path d="M304 86h26v8h-26z" fill="#1c1c22"/><path d="M300 118h16v14h-16z" fill="#2a55a8"/><path d="M314 128l14 6-2 8-14-6z" fill="#d9a98c"/><rect x="289" y="148" width="73" height="17" fill="#8e2a2e"/><rect x="292" y="152" width="48" height="8" fill="#b8b2b2"/></g><g filter="url(#bl)"><rect x="15.500" y="141" width="100" height="50" fill="#23262f"/><rect x="15.500" y="176" width="100" height="15" fill="#3c8c3c"/><rect x="40" y="148" width="45" height="26" fill="#2d3350"/><rect x="92" y="145" width="18" height="28" fill="#e4e6ee"/><rect x="48" y="156" width="8" height="12" fill="#c24a3a"/><rect x="62" y="156" width="8" height="12" fill="#3f78c6"/><rect x="74" y="156" width="8" height="12" fill="#c24a3a"/><rect x="20" y="146" width="14" height="10" fill="#5a5f7a"/></g><g fill="#d5d5d5"><rect x="140" y="152" width="8" height="1"/><rect x="166" y="152" width="14" height="1"/><rect x="190" y="152" width="10" height="1"/><rect x="140" y="158" width="6" height="1"/><rect x="166" y="158" width="22" height="1"/><rect x="210" y="158" width="18" height="1"/></g><rect x="0" y="192.500" width="378" height="21" fill="#fbb800"/><text x="24.800" y="203.800" font-family="Liberation Sans, sans-serif" font-size="8.600" font-weight="700" fill="#111" textLength="18.500" lengthAdjust="spacingAndGlyphs">SOP</text><rect x="25" y="205.600" width="18" height="1" fill="#333" opacity=".8"/><rect x="27.500" y="207.500" width="13" height=".9" fill="#333" opacity=".8"/><g clip-path="url(#cbar)"><circle cx="255.500" cy="203" r="10.200" fill="#fff"/><path d="M261 198.500a5 5 0 1 0-5 5.500" fill="none" stroke="#0b2555" stroke-width="3"/><path d="M256 204a4.500 4.500 0 0 1 1 9" fill="none" stroke="#fbb800" stroke-width="3"/><path d="M251 213.500h6" stroke="#f0645a" stroke-width="2"/><circle cx="285.800" cy="202.800" r="14.400" fill="#fff"/><circle cx="285.800" cy="202.800" r="12" fill="#0b2555"/><circle cx="285.800" cy="202.800" r="8.600" fill="#fff"/><circle cx="285.800" cy="202.800" r="6.600" fill="#fbb800"/><rect x="272" y="201.800" width="6" height="1.500" fill="#fff"/><rect x="293.500" y="201.800" width="6" height="1.500" fill="#fff"/><path d="M309 192.500h8a10.500 10.500 0 0 1 0 21h-8z" fill="#fff"/><path d="M311.500 196.500a5 5.500 0 0 1 0 11z" fill="#fbb800"/><path d="M309 196.500h2.500v11h-2.500z" fill="#0b2555"/></g></svg>
<div class="a" style="left:28px;top:544px;width:183px;height:104.5px;background:#fff;border:1px solid #d3d9e4"></div>
<svg class="a" style="left:29px;top:545px;" width="181" height="102.5" viewBox="0 0 378 213" preserveAspectRatio="none"><rect width="378" height="213" fill="#fff"/><text x="11.500" y="28" font-family="Liberation Sans, sans-serif" font-size="12.500" font-weight="700" fill="#111" textLength="103" lengthAdjust="spacingAndGlyphs">les avantages ?</text><rect x="0" y="192.500" width="378" height="21" fill="#fbb800"/><text x="24.800" y="203.800" font-family="Liberation Sans, sans-serif" font-size="8.600" font-weight="700" fill="#111" textLength="18.500" lengthAdjust="spacingAndGlyphs">SOP</text><rect x="25" y="205.600" width="18" height="1" fill="#333" opacity=".8"/><rect x="27.500" y="207.500" width="13" height=".9" fill="#333" opacity=".8"/><g clip-path="url(#cbar)"><circle cx="255.500" cy="203" r="10.200" fill="#fff"/><path d="M261 198.500a5 5 0 1 0-5 5.500" fill="none" stroke="#0b2555" stroke-width="3"/><path d="M256 204a4.500 4.500 0 0 1 1 9" fill="none" stroke="#fbb800" stroke-width="3"/><path d="M251 213.500h6" stroke="#f0645a" stroke-width="2"/><circle cx="285.800" cy="202.800" r="14.400" fill="#fff"/><circle cx="285.800" cy="202.800" r="12" fill="#0b2555"/><circle cx="285.800" cy="202.800" r="8.600" fill="#fff"/><circle cx="285.800" cy="202.800" r="6.600" fill="#fbb800"/><rect x="272" y="201.800" width="6" height="1.500" fill="#fff"/><rect x="293.500" y="201.800" width="6" height="1.500" fill="#fff"/><path d="M309 192.500h8a10.500 10.500 0 0 1 0 21h-8z" fill="#fff"/><path d="M311.500 196.500a5 5.500 0 0 1 0 11z" fill="#fbb800"/><path d="M309 196.500h2.500v11h-2.500z" fill="#0b2555"/></g></svg>
<div class="a" style="left:28px;top:668px;width:183px;height:104.5px;background:#fff;border:1px solid #d3d9e4"></div>
<svg class="a" style="left:29px;top:669px;" width="181" height="102.5" viewBox="0 0 378 213" preserveAspectRatio="none"><rect width="378" height="213" fill="#fff"/><text x="12.500" y="29" font-family="Liberation Sans, sans-serif" font-size="13.500" font-weight="700" fill="#111" textLength="99" lengthAdjust="spacingAndGlyphs">les avantages :</text><text x="12.500" y="61" font-family="Liberation Sans, sans-serif" font-size="7.300" font-weight="700" fill="#111" textLength="123" lengthAdjust="spacingAndGlyphs">- une pratique sportive libre</text><text x="12.500" y="74.5" font-family="Liberation Sans, sans-serif" font-size="7.300" font-weight="700" fill="#111" textLength="288" lengthAdjust="spacingAndGlyphs">- Accessible pour tous (français, étrangers, PMR, âges différents)</text><text x="12.500" y="88.5" font-family="Liberation Sans, sans-serif" font-size="7.300" font-weight="700" fill="#111" textLength="58" lengthAdjust="spacingAndGlyphs">- Sport santé</text><text x="12.500" y="100.5" font-family="Liberation Sans, sans-serif" font-size="7.300" font-weight="700" fill="#111" textLength="130" lengthAdjust="spacingAndGlyphs">- Créer du lien avec le monde</text><text x="12.500" y="114" font-family="Liberation Sans, sans-serif" font-size="7.300" font-weight="700" fill="#111" textLength="62" lengthAdjust="spacingAndGlyphs">- Et en France</text><g filter="url(#bl)"><rect x="208" y="13" width="91" height="50" fill="#6d5f5c"/><path d="M252 28l46-8v38l-30 5z" fill="#1fa03a"/><rect x="226" y="40" width="18" height="14" fill="#d23a3a"/><rect x="228" y="20" width="14" height="20" fill="#8f949c"/><rect x="208" y="13" width="20" height="30" fill="#4a4650"/><rect x="270" y="14" width="29" height="8" fill="#7a3c3a"/><rect x="208" y="79.500" width="93" height="45" fill="#c9ccd3"/><path d="M218 96q10-16 22 0l2 28h-26z" fill="#3b3d42"/><path d="M262 100q10-14 22 0l4 24h-28z" fill="#2a2b30"/><circle cx="230" cy="90" r="6" fill="#b98f78"/><circle cx="273" cy="94" r="6" fill="#caa58c"/><rect x="208" y="79.500" width="93" height="8" fill="#e8eaee"/><rect x="208" y="124.500" width="102" height="64.500" fill="#36393f"/><rect x="216" y="173.500" width="89" height="9.500" rx="1" fill="#5865f2"/><rect x="251" y="133" width="14" height="12" fill="#e9e9ee"/><rect x="254" y="139" width="8" height="6" fill="#c23b3b"/><rect x="236" y="153" width="46" height="3.500" fill="#d7d9dd"/><rect x="240" y="148" width="38" height="1.500" fill="#8a8d93"/><rect x="240" y="160" width="38" height="1.500" fill="#74777d"/><rect x="316.500" y="39.500" width="60" height="149.500" fill="#2f3136"/><rect x="316.500" y="39.500" width="12" height="149.500" fill="#202225"/><circle cx="322.500" cy="47" r="3.300" fill="#8e9297"/><circle cx="322.500" cy="60" r="3.300" fill="#d9dadc"/><circle cx="322.500" cy="73" r="3.300" fill="#8e9297"/><circle cx="322.500" cy="86" r="3.300" fill="#b9bbbe"/><circle cx="322.500" cy="99" r="3.300" fill="#d9dadc"/><circle cx="322.500" cy="112" r="3.300" fill="#e8a23a"/><circle cx="322.500" cy="125" r="3.300" fill="#c24a4a"/><circle cx="322.500" cy="138" r="3.300" fill="#5a5d63"/><circle cx="322.500" cy="151" r="3.300" fill="#5a5d63"/><rect x="333" y="45" width="18" height="1.600" fill="#c9cbcf"/><rect x="335" y="53.3" width="25" height="1.600" fill="#7b7e85"/><rect x="337" y="61.6" width="32" height="1.600" fill="#7b7e85"/><rect x="333" y="69.9" width="19" height="1.600" fill="#7b7e85"/><rect x="335" y="78.2" width="26" height="1.600" fill="#7b7e85"/><rect x="337" y="86.5" width="33" height="1.600" fill="#c9cbcf"/><rect x="333" y="94.8" width="20" height="1.600" fill="#7b7e85"/><rect x="335" y="103.1" width="27" height="1.600" fill="#7b7e85"/><rect x="337" y="111.4" width="34" height="1.600" fill="#7b7e85"/><rect x="333" y="119.7" width="21" height="1.600" fill="#7b7e85"/><rect x="335" y="128" width="28" height="1.600" fill="#c9cbcf"/><rect x="337" y="136.3" width="35" height="1.600" fill="#7b7e85"/><rect x="333" y="144.6" width="22" height="1.600" fill="#7b7e85"/><rect x="335" y="152.9" width="29" height="1.600" fill="#7b7e85"/><rect x="337" y="161.2" width="36" height="1.600" fill="#7b7e85"/><rect x="333" y="169.5" width="23" height="1.600" fill="#c9cbcf"/><rect x="335" y="177.8" width="30" height="1.600" fill="#7b7e85"/><rect x="9" y="127" width="94.500" height="62" fill="#c5c9d2"/><rect x="9" y="160" width="94.500" height="29" fill="#1d2742"/><path d="M26 158q14-18 28 0l4 31h-36z" fill="#2d6fd0"/><circle cx="44" cy="146" r="7" fill="#c9a58f"/><path d="M60 160q10-10 18 0l2 29h-22z" fill="#23252c"/><rect x="72" y="164" width="30" height="12" fill="#2a3a6a"/><rect x="108.500" y="127" width="94" height="62" fill="#9aa5b5"/><rect x="108.500" y="127" width="94" height="14" fill="#3a4a66"/><rect x="108.500" y="141" width="94" height="14" fill="#8a6e58"/><rect x="108.500" y="168" width="94" height="21" fill="#2f7fc4"/><path d="M130 152q8-10 16 0l4 30h-22z" fill="#2a2a30"/><path d="M162 158q8-8 14 0l2 24h-18z" fill="#1f2026"/><circle cx="138" cy="148" r="5" fill="#b99880"/><circle cx="169" cy="153" r="4.500" fill="#c4a38b"/></g><rect x="0" y="192.500" width="378" height="21" fill="#fbb800"/><text x="24.800" y="203.800" font-family="Liberation Sans, sans-serif" font-size="8.600" font-weight="700" fill="#111" textLength="18.500" lengthAdjust="spacingAndGlyphs">SOP</text><rect x="25" y="205.600" width="18" height="1" fill="#333" opacity=".8"/><rect x="27.500" y="207.500" width="13" height=".9" fill="#333" opacity=".8"/><g clip-path="url(#cbar)"><circle cx="255.500" cy="203" r="10.200" fill="#fff"/><path d="M261 198.500a5 5 0 1 0-5 5.500" fill="none" stroke="#0b2555" stroke-width="3"/><path d="M256 204a4.500 4.500 0 0 1 1 9" fill="none" stroke="#fbb800" stroke-width="3"/><path d="M251 213.500h6" stroke="#f0645a" stroke-width="2"/><circle cx="285.800" cy="202.800" r="14.400" fill="#fff"/><circle cx="285.800" cy="202.800" r="12" fill="#0b2555"/><circle cx="285.800" cy="202.800" r="8.600" fill="#fff"/><circle cx="285.800" cy="202.800" r="6.600" fill="#fbb800"/><rect x="272" y="201.800" width="6" height="1.500" fill="#fff"/><rect x="293.500" y="201.800" width="6" height="1.500" fill="#fff"/><path d="M309 192.500h8a10.500 10.500 0 0 1 0 21h-8z" fill="#fff"/><path d="M311.500 196.500a5 5.500 0 0 1 0 11z" fill="#fbb800"/><path d="M309 196.500h2.500v11h-2.500z" fill="#0b2555"/></g></svg>
<div class="a" style="left:28px;top:792px;width:183px;height:36px;background:#fff;border:1px solid #d3d9e4"></div>
<svg class="a" style="left:29px;top:793px;" width="181" height="35" viewBox="0 0 378 72.7317" preserveAspectRatio="none"><rect width="378" height="213" fill="#fff"/><text x="12" y="27.500" font-family="Liberation Sans, sans-serif" font-size="12.500" font-weight="700" fill="#111" textLength="190" lengthAdjust="spacingAndGlyphs">les inconvenients / risques ?</text></svg>
<div class="t" style="left:13.0px;top:170.0px;font-size:15.5px;color:#666;">1</div>
<div class="t" style="left:13.0px;top:294.0px;font-size:15.5px;color:#c9482b;">2</div>
<div class="t" style="left:13.0px;top:418.0px;font-size:15.5px;color:#666;">3</div>
<div class="t" style="left:13.0px;top:542.0px;font-size:15.5px;color:#666;">4</div>
<div class="t" style="left:13.0px;top:666.0px;font-size:15.5px;color:#666;">5</div>
<div class="t" style="left:13.0px;top:790.0px;font-size:15.5px;color:#666;">6</div>
<div class="a" style="left:729px;top:158px;width:380px;height:215px;background:#fff;box-shadow:0 0 2px rgba(0,0,0,.18)"></div>
<svg class="a" style="left:729.7px;top:158.8px;" width="378.2" height="213.4" viewBox="0 0 378 213" preserveAspectRatio="none"><rect width="378" height="213" fill="#fff"/><text x="146.300" y="27" font-family="Liberation Sans, sans-serif" font-size="13.400" font-weight="700" fill="#111" textLength="85.300" lengthAdjust="spacingAndGlyphs">Présentation</text><rect x="146.300" y="28.400" width="85.300" height="1" fill="#111"/><polyline points="146.3 30.5 147.3 31.5 148.3 30.5 149.3 31.5 150.3 30.5 151.3 31.5 152.3 30.5 153.3 31.5 154.3 30.5 155.3 31.5 156.3 30.5 157.3 31.5 158.3 30.5 159.3 31.5 160.3 30.5 161.3 31.5 162.3 30.5 163.3 31.5 164.3 30.5 165.3 31.5 166.3 30.5 167.3 31.5 168.3 30.5 169.3 31.5 170.3 30.5 171.3 31.5 172.3 30.5 173.3 31.5 174.3 30.5 175.3 31.5 176.3 30.5 177.3 31.5 178.3 30.5 179.3 31.5 180.3 30.5 181.3 31.5 182.3 30.5 183.3 31.5 184.3 30.5 185.3 31.5 186.3 30.5 187.3 31.5 188.3 30.5 189.3 31.5 190.3 30.5 191.3 31.5 192.3 30.5 193.3 31.5 194.3 30.5 195.3 31.5 196.3 30.5 197.3 31.5 198.3 30.5 199.3 31.5 200.3 30.5 201.3 31.5 202.3 30.5 203.3 31.5 204.3 30.5 205.3 31.5 206.3 30.5 207.3 31.5 208.3 30.5 209.3 31.5 210.3 30.5 211.3 31.5 212.3 30.5 213.3 31.5 214.3 30.5 215.3 31.5 216.3 30.5 217.3 31.5 218.3 30.5 219.3 31.5 220.3 30.5 221.3 31.5 222.3 30.5 223.3 31.5 224.3 30.5 225.3 31.5 226.3 30.5 227.3 31.5 228.3 30.5 229.3 31.5 230.3 30.5 231.3 31.5" fill="none" stroke="#e8413a" stroke-width="0.7"/><text x="11" y="60.800" font-family="Liberation Sans, sans-serif" font-size="10.700" font-weight="700" fill="#111">•</text><text x="18.400" y="60.800" font-family="Liberation Sans, sans-serif" font-size="10.700" font-weight="700" fill="#111" textLength="26.200" lengthAdjust="spacingAndGlyphs">Nous</text><text x="11" y="77" font-family="Liberation Sans, sans-serif" font-size="10.700" font-weight="700" fill="#111">•</text><text x="18.400" y="77" font-family="Liberation Sans, sans-serif" font-size="10.700" font-weight="700" fill="#111" textLength="67.400" lengthAdjust="spacingAndGlyphs">METAVERSE</text><text x="11" y="93" font-family="Liberation Sans, sans-serif" font-size="10.700" font-weight="700" fill="#111">•</text><text x="39" y="93" font-family="Liberation Sans, sans-serif" font-size="10.700" font-weight="700" fill="#111" textLength="35.300" lengthAdjust="spacingAndGlyphs">Esport</text><rect x="39" y="94.300" width="35.300" height=".9" fill="#111"/><polyline points="39.0 96.1 40.0 97.1 41.0 96.1 42.0 97.1 43.0 96.1 44.0 97.1 45.0 96.1 46.0 97.1 47.0 96.1 48.0 97.1 49.0 96.1 50.0 97.1 51.0 96.1 52.0 97.1 53.0 96.1 54.0 97.1 55.0 96.1 56.0 97.1 57.0 96.1 58.0 97.1 59.0 96.1 60.0 97.1 61.0 96.1 62.0 97.1 63.0 96.1 64.0 97.1 65.0 96.1 66.0 97.1 67.0 96.1 68.0 97.1 69.0 96.1 70.0 97.1 71.0 96.1 72.0 97.1 73.0 96.1 74.0 97.1" fill="none" stroke="#e8413a" stroke-width="0.7"/><text x="240.600" y="93" font-family="Liberation Sans, sans-serif" font-size="10.700" font-weight="700" fill="#111" textLength="52.800" lengthAdjust="spacingAndGlyphs">Métasport</text><rect x="240.600" y="94.300" width="52.800" height=".9" fill="#111"/><polyline points="240.6 96.1 241.6 97.1 242.6 96.1 243.6 97.1 244.6 96.1 245.6 97.1 246.6 96.1 247.6 97.1 248.6 96.1 249.6 97.1 250.6 96.1 251.6 97.1 252.6 96.1 253.6 97.1 254.6 96.1 255.6 97.1 256.6 96.1 257.6 97.1 258.6 96.1 259.6 97.1 260.6 96.1 261.6 97.1 262.6 96.1 263.6 97.1 264.6 96.1 265.6 97.1 266.6 96.1 267.6 97.1 268.6 96.1 269.6 97.1 270.6 96.1 271.6 97.1 272.6 96.1 273.6 97.1 274.6 96.1 275.6 97.1 276.6 96.1 277.6 97.1 278.6 96.1 279.6 97.1 280.6 96.1 281.6 97.1 282.6 96.1 283.6 97.1 284.6 96.1 285.6 97.1 286.6 96.1 287.6 97.1 288.6 96.1 289.6 97.1 290.6 96.1 291.6 97.1 292.6 96.1" fill="none" stroke="#e8413a" stroke-width="0.7"/><svg x="27.5" y="100.4" width="110.6" height="73.1" viewBox="0 0 100 100" preserveAspectRatio="none"><g filter="url(#bl2)"><rect x="-6" y="-6" width="112" height="112" fill="#dcd6c8"/><rect x="-6" y="-6" width="112" height="15" fill="#f3f3f5"/><rect x="1" y="0" width="1.2" height="9.500" fill="#a7abb3"/><rect x="8" y="0" width="1.2" height="9.500" fill="#a7abb3"/><rect x="19" y="0" width="1.2" height="9.500" fill="#a7abb3"/><rect x="29" y="0" width="1.2" height="9.500" fill="#a7abb3"/><rect x="40" y="0" width="1.2" height="9.500" fill="#a7abb3"/><rect x="47" y="0" width="1.2" height="9.500" fill="#a7abb3"/><rect x="55" y="0" width="1.2" height="9.500" fill="#a7abb3"/><rect x="62" y="0" width="1.2" height="9.500" fill="#a7abb3"/><rect x="66" y="0" width="1.2" height="9.500" fill="#a7abb3"/><rect x="73" y="0" width="1.2" height="9.500" fill="#a7abb3"/><rect x="80" y="0" width="1.8" height="9.500" fill="#6f7480"/><rect x="84" y="0" width="1.8" height="9.500" fill="#6f7480"/><rect x="88" y="0" width="1.8" height="9.500" fill="#6f7480"/><rect x="93" y="0" width="1.8" height="9.500" fill="#6f7480"/><rect x="96" y="0" width="1.8" height="9.500" fill="#6f7480"/><rect x="97" y="0" width="2.500" height="8" fill="#2b2d35"/><rect x="33.800" y="18" width="31" height="29" fill="#c9c9cb"/><rect x="36" y="19.500" width="27" height="26" fill="#2b3d74"/><path d="M36 36l27-8v17.500h-27z" fill="#5a7fe0"/><rect x="45" y="8" width="10" height="11.500" fill="#1b1c24"/><path d="M-6 60.700L106 46.700V84.500L66 81L-6 98.500z" fill="#1a2142"/><path d="M0 60L100 47.500V58L0 72z" fill="#2c3566"/><path d="M8 62l58-7v8l-58 8z" fill="#3f4877"/><rect x="0" y="47" width="8" height="16" fill="#2a2560"/><path d="M0 66l4 2v6l-4 2z" fill="#c64b8c"/><path d="M80 50.500l16-2v7l-16 2z" fill="#454690"/><rect x="86.500" y="50.500" width="2" height="6" fill="#d9d9ee"/><path d="M0 78l66-13v4l-66 14z" fill="#141a33"/><path d="M-6 103L66 81l40 3.500v22h-112z" fill="#d8ba8e"/><path d="M30 100L100 88v12z" fill="#dcc19a"/><path d="M29 88l3 11" stroke="#33261e" stroke-width=".8"/><path d="M49 78l4-7h2l-3 7zM53 78l4-7h2l-3 7z" fill="#e6ecf5"/><rect x="47" y="79.500" width="13" height="1.500" fill="#8fb5d6"/><path d="M84 68h5v2h-3v4h3v2h-5z" fill="#59c4dc"/><path d="M60 33q6-5 14-2l7 4 -1 18-14 2-3-12z" fill="#2a69c6"/><path d="M56 15l4 1 3 16-4 1z" fill="#c48d6c"/><ellipse cx="66" cy="28" rx="4.500" ry="5.500" fill="#3a2f2c"/><path d="M66 30l4-1 1 4-4 1z" fill="#d0a080"/><path d="M80 37l5 11-2 3-5-9z" fill="#c48d6c"/><rect x="82" y="49" width="3" height="3" fill="#1c1c22"/><path d="M67 53l14-2 3 22-9 1-2-8-3 10-4-1z" fill="#14151b"/><path d="M68 75l5 1 1 16-4 0z" fill="#c99874"/><path d="M78 73l5-1 7 20-4 1z" fill="#c99874"/><path d="M68 92h8v5l-8 1z" fill="#ececf2"/><path d="M85 93l8-1 1 6-8 1z" fill="#e4e6ee"/><rect x="70" y="93" width="4" height="4" fill="#555a66"/></g></svg><text x="29.712" y="165.094" font-family="Liberation Sans, sans-serif" font-size="6.9445" font-weight="700" font-style="italic" fill="#4fc0dc" textLength="19.355" lengthAdjust="spacingAndGlyphs">Gerflor</text><svg x="210.4" y="103.1" width="120.2" height="76.5" viewBox="0 0 100 100" preserveAspectRatio="none"><g filter="url(#bl2)"><rect x="-6" y="-6" width="112" height="112" fill="#16305f"/><rect x="42" y="-6" width="42" height="112" fill="#1b55c4"/><rect x="82" y="-6" width="24" height="46" fill="#0d1b3c"/><path d="M0 0h12l-6 8-6 4z" fill="#e1562b"/><path d="M11 0h16l-8 16-13 2-2-8z" fill="#e7c6c2"/><path d="M0 12l14 4-6 10-8 2z" fill="#b9482e"/><path d="M24 0h17v18l-10 4-9-6z" fill="#1b1e29"/><rect x="40" y="0" width="2.500" height="30" fill="#e4e6ea"/><path d="M-6 28q16-12 26-6l-2 84H-6z" fill="#25437f"/><path d="M4 40q4-8 10-8l-4 30z" fill="#16305f"/><path d="M12 58q8-14 26-14l14 6 2 50H10z" fill="#2a4879"/><path d="M13 62l6-4 2 36-5 4z" fill="#e9dde2"/><path d="M16 60l3-2 2 38-3 2z" fill="#b14a58"/><ellipse cx="35.500" cy="27" rx="8" ry="14" fill="#d9a68b"/><path d="M27 16q8-12 18-3l-1 6q-8-5-16 1z" fill="#b79d80"/><ellipse cx="29" cy="27" rx="3.200" ry="5.500" fill="#1b1c22"/><path d="M22 30q3-8 6-6l2 14-6 6z" fill="#d9a68b"/><path d="M43 38q4 2 3 8l-5 4z" fill="#c9967c"/><path d="M40 24q6 4 4 16l-3-2z" fill="#1b1c22"/><path d="M15 74q4-10 14-16l12-4 10 2-4 10-14 6-10 14z" fill="#191a22"/><path d="M28 56l10 2-2 8-8-2z" fill="#7a2c3c"/><path d="M30 70l10-3v4l-10 3zM30 78l8-2v3l-8 2z" fill="#d5dae6"/><path d="M49 26q4-12 12-10l6 4-4 36-10 6-5-10z" fill="#ebe6e2"/><path d="M53 26q4-8 9-6l2 4-4 28-6 2z" fill="#1f2027"/><path d="M60 20l4 2-1 8-3-1z" fill="#b8923c"/><path d="M49 44l5 18 4-2-4-18z" fill="#c9364a"/><path d="M55 48q6-14 18-12l2 50-20 4z" fill="#2a4879"/><path d="M64 60l8-2v4l-8 2z" fill="#e6eaf2"/><path d="M57 62l3 22 3-1-3-22z" fill="#ead9dc"/><ellipse cx="73.500" cy="26" rx="6.500" ry="11" fill="#e2ae90"/><path d="M66 17q8-12 17-2l-2 5q-7-4-14 1z" fill="#d6a45c"/><path d="M80 20q4 6 2 16l-3 0q2-8 0-14z" fill="#1f2027"/><path d="M66 22q-2 6 0 12l2-1q-1-5 0-10z" fill="#1f2027"/><path d="M70 36l16-4 6 4 0 60-20 2z" fill="#0b0c11"/><path d="M88 30l18 9v67H90z" fill="#15161d"/><path d="M92 40l6 2v50l-6-2z" fill="#23242c"/><path d="M42 90l28-4 22 8 8-2v8H42z" fill="#1d52c0"/><path d="M56 86l14 2-2 6-14-2z" fill="#2a4879"/><path d="M70 84l4-8 2 1-3 9z" fill="#e6eaf2"/></g></svg><rect x="0" y="192.500" width="378" height="21" fill="#fbb800"/><text x="24.800" y="203.800" font-family="Liberation Sans, sans-serif" font-size="8.600" font-weight="700" fill="#111" textLength="18.500" lengthAdjust="spacingAndGlyphs">SOP</text><rect x="25" y="205.600" width="18" height="1" fill="#333" opacity=".8"/><rect x="27.500" y="207.500" width="13" height=".9" fill="#333" opacity=".8"/><g clip-path="url(#cbar)"><circle cx="255.500" cy="203" r="10.200" fill="#fff"/><path d="M261 198.500a5 5 0 1 0-5 5.500" fill="none" stroke="#0b2555" stroke-width="3"/><path d="M256 204a4.500 4.500 0 0 1 1 9" fill="none" stroke="#fbb800" stroke-width="3"/><path d="M251 213.500h6" stroke="#f0645a" stroke-width="2"/><circle cx="285.800" cy="202.800" r="14.400" fill="#fff"/><circle cx="285.800" cy="202.800" r="12" fill="#0b2555"/><circle cx="285.800" cy="202.800" r="8.600" fill="#fff"/><circle cx="285.800" cy="202.800" r="6.600" fill="#fbb800"/><rect x="272" y="201.800" width="6" height="1.500" fill="#fff"/><rect x="293.500" y="201.800" width="6" height="1.500" fill="#fff"/><path d="M309 192.500h8a10.500 10.500 0 0 1 0 21h-8z" fill="#fff"/><path d="M311.500 196.500a5 5.500 0 0 1 0 11z" fill="#fbb800"/><path d="M309 196.500h2.500v11h-2.500z" fill="#0b2555"/></g></svg>
<div class="a" style="left:1583px;top:154px;width:17px;height:171px;background:#dadada"></div>
<div class="a" style="left:1583px;top:154px;width:17px;height:17px;background:#fff;border:1px solid #c9c9c9"></div>
<div class="a" style="left:1583px;top:188px;width:17px;height:18px;background:#fff;border:1px solid #c9c9c9"></div>
<div class="a" style="left:1583px;top:308px;width:17px;height:17px;background:#fff;border:1px solid #c9c9c9"></div>
<svg class="a" style="left:1583px;top:154px" width="17" height="210" viewBox="0 0 17 210"><g fill="#666"><path d="M5 10.500l3.500-4 3.500 4z"/><path d="M5 160.500l3.500 4 3.500-4z"/><path d="M5 178.500l3.500-4 3.500 4zM5 183l3.500-4 3.500 4z"/><path d="M5 192l3.500 4 3.500-4zM5 196.500l3.500 4 3.500-4z"/></g></svg>
<svg class="a" style="left:0;top:0" width="1600" height="520" viewBox="0 0 1600 520"><polyline points="298.0 442.8 299.2 444.2 300.4 442.8 301.6 444.2 302.8 442.8 304.0 444.2 305.2 442.8 306.4 444.2 307.6 442.8 308.8 444.2 310.0 442.8 311.2 444.2 312.4 442.8 313.6 444.2 314.8 442.8 316.0 444.2 317.2 442.8 318.4 444.2 319.6 442.8 320.8 444.2 322.0 442.8 323.2 444.2 324.4 442.8 325.6 444.2 326.8 442.8 328.0 444.2 329.2 442.8 330.4 444.2 331.6 442.8 332.8 444.2 334.0 442.8 335.2 444.2 336.4 442.8 337.6 444.2 338.8 442.8 340.0 444.2 341.2 442.8 342.4 444.2 343.6 442.8 344.8 444.2 346.0 442.8 347.2 444.2 348.4 442.8 349.6 444.2 350.8 442.8 352.0 444.2 353.2 442.8 354.4 444.2 355.6 442.8 356.8 444.2 358.0 442.8 359.2 444.2" fill="none" stroke="#e0433b" stroke-width="0.8"/><polyline points="319.5 497.0 320.7 498.4 321.9 497.0 323.1 498.4 324.3 497.0 325.5 498.4 326.7 497.0 327.9 498.4 329.1 497.0 330.3 498.4 331.5 497.0 332.7 498.4 333.9 497.0 335.1 498.4 336.3 497.0 337.5 498.4 338.7 497.0 339.9 498.4 341.1 497.0 342.3 498.4 343.5 497.0 344.7 498.4 345.9 497.0 347.1 498.4 348.3 497.0 349.5 498.4 350.7 497.0 351.9 498.4 353.1 497.0 354.3 498.4 355.5 497.0 356.7 498.4 357.9 497.0 359.1 498.4 360.3 497.0 361.5 498.4" fill="none" stroke="#e0433b" stroke-width="0.8"/><polyline points="383.7 497.0 384.9 498.4 386.1 497.0 387.3 498.4 388.5 497.0 389.7 498.4 390.9 497.0 392.1 498.4 393.3 497.0 394.5 498.4 395.7 497.0 396.9 498.4 398.1 497.0 399.3 498.4 400.5 497.0 401.7 498.4 402.9 497.0 404.1 498.4 405.3 497.0 406.5 498.4 407.7 497.0 408.9 498.4 410.1 497.0 411.3 498.4 412.5 497.0 413.7 498.4 414.9 497.0 416.1 498.4 417.3 497.0 418.5 498.4 419.7 497.0 420.9 498.4 422.1 497.0 423.3 498.4 424.5 497.0 425.7 498.4 426.9 497.0 428.1 498.4 429.3 497.0 430.5 498.4 431.7 497.0 432.9 498.4 434.1 497.0 435.3 498.4 436.5 497.0 437.7 498.4 438.9 497.0 440.1 498.4 441.3 497.0 442.5 498.4 443.7 497.0 444.9 498.4 446.1 497.0 447.3 498.4 448.5 497.0 449.7 498.4 450.9 497.0 452.1 498.4" fill="none" stroke="#e0433b" stroke-width="0.8"/></svg>
<div class="t" style="left:268.7px;top:389.8px;font-size:15px;letter-spacing:0.037px;color:#555;white-space:pre;">Steph et Karl  :NOUS (individu + structure)</div>
<div class="t" style="left:268.7px;top:426.8px;font-size:15px;letter-spacing:0.026px;color:#555;">Karl Métavers = un espace entièrement virtuel et infini dans lequel les personnes interagissent à travers des avatars</div>
<div class="t" style="left:265.0px;top:444.8px;font-size:15px;letter-spacing:0.056px;color:#555;">Pour le découvrir, il faut utiliser un matériel connecté (Casque, téléphone, console)</div>
<div class="t" style="left:265.0px;top:481.1px;font-size:15px;letter-spacing:0.089px;color:#555;white-space:pre;">Steph  : esport et metasport</div>
<div class="a" style="left:1263px;top:828px;width:34px;height:22px;background:#c9c9c9"></div>
<svg class="a" style="left:0;top:828px" width="1600" height="22" viewBox="0 828 1600 22" fill="none" stroke="#666" stroke-width="1">
<path d="M110.500 833.500h6.500v10h-6.500zM117 833.500h3M117 843.500h5" /><path d="M117.500 841l5.500-7 1.800 1.500-5.500 7-2.200.8z" fill="#f1f1f1"/>
<path d="M1097 840.500h10M1097 843.500h10M1099 837.500h6" /><path d="M1099.500 836l2.500-3 2.500 3z" fill="#666" stroke="none"/>
<path d="M1159.500 832.500h12v8h-6l-3 3v-3h-3z" fill="#555" stroke="#555"/>
<rect x="1273.500" y="833.500" width="12" height="10"/><path d="M1277.500 833.500v10M1279.500 836.500h4M1279.500 839.500h4" stroke-width=".9"/>
<rect x="1307.500" y="833.500" width="4.500" height="4"/><rect x="1315" y="833.500" width="4.500" height="4"/><rect x="1307.500" y="840" width="4.500" height="4"/><rect x="1315" y="840" width="4.500" height="4"/>
<path d="M1342 834.500h5.500v9h-5.500zM1347.500 834.500h5.500v9h-5.500z"/><path d="M1343.500 837h2.500M1343.500 839h2.500M1343.500 841h2.500M1349 837h2.500M1349 839h2.500M1349 841h2.500" stroke-width=".7"/>
<path d="M1375.500 833.500h12M1376.500 834v5.500h10v-5.500M1381.500 839.500v3M1379 844.500h5" />
<path d="M1403.500 838.500h7" stroke="#444" stroke-width="1.400"/>
<path d="M1414.500 838.500h104" stroke="#a9a9a9"/><path d="M1466.500 836v5" stroke="#a9a9a9"/>
<rect x="1425" y="832.500" width="4.500" height="11.500" fill="#555" stroke="none"/>
<path d="M1522.500 838.500h9M1527 834v9" stroke="#444" stroke-width="1.400"/>
<rect x="1582.500" y="833.500" width="11.500" height="11.500"/><path d="M1588.200 835.500v2.500M1588.200 841v2.500M1584.500 839.200h2.500M1590 839.200h2.500" stroke-width="1.200"/>
</svg>
<div class="t" style="left:7.0px;top:831.0px;font-size:11.5px;letter-spacing:-0.260px;color:#555;">Diapositive 2 de 8</div>
<div class="t" style="left:139.5px;top:831.1px;font-size:11.25px;letter-spacing:-0.549px;color:#555;">Français (France)</div>
<div class="t" style="left:1112.5px;top:831.0px;font-size:11.5px;letter-spacing:-0.212px;color:#555;">Notes</div>
<div class="t" style="left:1176.5px;top:831.0px;font-size:11.5px;letter-spacing:-0.507px;color:#555;">Commentaires</div>
<div class="t" style="left:1545.5px;top:831.4px;font-size:10.5px;letter-spacing:-0.480px;color:#555;">29 %</div>
<div class="a" style="left:457.500px;top:858.500px;width:227.500px;height:33px;border-radius:16.500px;background:#f1f3f8;border:1px solid #cfd3dc;box-shadow:0 1px 1px rgba(0,0,0,.06)"></div>
<div class="a" style="left:1150px;top:855.500px;width:40px;height:39px;border-radius:4px;background:#f0f2f7;border:1px solid #e6e8ee"></div>
<div class="a" style="left:1562.500px;top:867.500px;width:16.500px;height:16.500px;border-radius:50%;background:#0a63c2"></div>
<svg class="a" style="left:0;top:850px" width="1600" height="50" viewBox="0 850 1600 50" fill="none">
<defs>
<linearGradient id="gw" x1="0" y1="0" x2="1" y2="1"><stop offset="0" stop-color="#5cc8f5"/><stop offset="1" stop-color="#0a6fd6"/></linearGradient>
<linearGradient id="ge" x1="1" y1="0" x2="0" y2="1"><stop offset="0" stop-color="#63d36c"/><stop offset=".35" stop-color="#2fc0b4"/><stop offset=".6" stop-color="#1b8fe0"/><stop offset="1" stop-color="#0d55a8"/></linearGradient>
<radialGradient id="gf" cx=".5" cy=".3" r=".8"><stop offset="0" stop-color="#ffd53a"/><stop offset=".5" stop-color="#ff7b24"/><stop offset="1" stop-color="#e3226a"/></radialGradient>
<linearGradient id="gm" x1="0" y1="0" x2="0" y2="1"><stop offset="0" stop-color="#2ba4ea"/><stop offset="1" stop-color="#1272c8"/></linearGradient>
<linearGradient id="gwe" x1="0" y1="0" x2="1" y2="1"><stop offset="0" stop-color="#b4b8bc"/><stop offset=".55" stop-color="#8b9096"/><stop offset="1" stop-color="#6d7279"/></linearGradient>
<linearGradient id="gfo" x1="0" y1="0" x2="0" y2="1"><stop offset="0" stop-color="#fdd75e"/><stop offset="1" stop-color="#f6bb2c"/></linearGradient>
</defs>
<!-- weather -->
<circle cx="23.600" cy="874.800" r="11" fill="url(#gwe)"/><path d="M24.500 883.500h7.500a2.600 2.600 0 0 0 .300-5.200 3.600 3.600 0 0 0-6.800-.800 3 3 0 0 0-1 6z" fill="#f3f4f6"/>
<!-- windows -->
<rect x="419" y="863" width="11.700" height="11.700" rx="1" fill="url(#gw)"/><rect x="432.200" y="863" width="11.700" height="11.700" rx="1" fill="url(#gw)"/><rect x="419" y="876.200" width="11.700" height="11.700" rx="1" fill="url(#gw)"/><rect x="432.200" y="876.200" width="11.700" height="11.700" rx="1" fill="url(#gw)"/>
<!-- search magnifier -->
<circle cx="475.500" cy="873.500" r="5.500" stroke="#222" stroke-width="1.700"/><path d="M479.500 878l4.500 4.800" stroke="#222" stroke-width="1.900" stroke-linecap="round"/>
<!-- manatee -->
<path d="M637 872c2-7 10-9 17-8 9 1 16 6 22 13 3 3 3 8-1 9-3 0-4-3-6-4-6 2-14 3-20 2-2 2-5 3-7 1 1-2 2-3 2-4-4-1-8-4-7-9z" fill="#8f8f9a"/><path d="M641 869c4-4 10-4 14-3-4 1-9 3-12 7z" fill="#b9b9c4"/><circle cx="645" cy="869" r=".9" fill="#333"/>
<path d="M633 890c-1-6 0-12 2-16 1 4 2 8 1 16zM636 890c1-5 2-9 4-12 0 4 0 8-1 12z" fill="#9ac43c"/>
<!-- task view -->
<rect x="706" y="862.500" width="17" height="17" rx="2" fill="#f4f4f6" stroke="#dcdde2" stroke-width=".6"/><rect x="699" y="869.500" width="17.500" height="17.500" rx="2" fill="#1d1d1f"/><path d="M706 869.500h10.500v10.500h-10.500z" fill="#b9b9bd"/>
<!-- teams chat -->
<circle cx="757" cy="874.500" r="12" fill="#5b5fc7"/><path d="M748 884l-2 5 7-3z" fill="#5b5fc7"/><rect x="750" y="870" width="9.500" height="9" rx="1.500" fill="#fff"/><path d="M760 873l4-2.500v8l-4-2.500z" fill="#fff"/>
<!-- edge -->
<circle cx="803.300" cy="875" r="12.600" fill="url(#ge)"/>
<path d="M791 877c0-7 5-11.500 11.500-11.500 5.500 0 9.500 3.500 9.500 7.500-2-2.500-5-3.500-8-3-4 .700-6.500 4-6 8 .500 4 4 7 9 7.500-8 2.500-16-2-16-8.500z" fill="#0f5bb0" opacity=".85"/>
<path d="M816.500 875.500c-3.500-.500-8 0-10 1.800-1.800 1.700-1 4 1.500 4.700 3.500 1 7-1.500 8.500-6.500z" fill="#dfe2ec"/>
<!-- firefox -->
<circle cx="848.800" cy="875" r="11.800" fill="url(#gf)"/><circle cx="849.500" cy="875.500" r="5.800" fill="#7a3fe0"/><path d="M839 868c2-3 5-5 8-5-1 2 0 3 2 4 3 1 5 3 5 6-2-3-5-3-7-2-3 1-4 4-2 7-4-1-7-5-6-10z" fill="#ffb52e"/>
<rect x="845.800" y="891.700" width="6.500" height="2.500" rx="1.200" fill="#8a8d93"/>
<!-- explorer -->
<path d="M881.700 865.500a1.600 1.600 0 0 1 1.600-1.600h8l2.700 3h-12.300z" fill="#dfa11c"/><rect x="881.700" y="866.500" width="26.300" height="20" rx="1.600" fill="url(#gfo)"/><path d="M888.500 879.600h12.600a1.700 1.700 0 0 1 1.700 1.700v5.200h-16v-5.200a1.700 1.700 0 0 1 1.700-1.700z" fill="#1a73d6"/>
<rect x="892" y="891.700" width="6.500" height="2.500" rx="1.200" fill="#8a8d93"/>
<!-- mail -->
<path d="M928 873l13-9.500 13 9.500z" fill="#0f5aa8"/><rect x="928" y="872" width="26" height="15" rx="1" fill="url(#gm)"/><path d="M930 872l11 8 11-8z" fill="#e9f3fb"/>
<!-- thunderbird -->
<circle cx="986.500" cy="875" r="12.300" fill="#1f63c8"/><path d="M977 876c1-6 7-9 12-7 4 1 6 4 7 8-3 4-8 7-13 5-3 0-6-3-6-6z" fill="#f1f3f8"/><path d="M976 869c4-4 10-5 15-2-5 0-9 2-12 6z" fill="#0e3f91"/><path d="M980 877l6 3 8-5" stroke="#9aa4b8" stroke-width="1"/>
<!-- purple mask -->
<circle cx="1032" cy="875" r="12" fill="#7a1fd6"/><path d="M1023.500 874.500c0-2.500 2-4 4.500-4 2 0 3 1 4 1s2-1 4-1c2.500 0 4.500 1.500 4.500 4s-2 4-4.500 4c-2 0-3-1-4-1s-2 1-4 1c-2.500 0-4.500-1.500-4.500-4z" fill="#fff"/><circle cx="1028" cy="874.500" r="1.600" fill="#7a1fd6"/><circle cx="1036" cy="874.500" r="1.600" fill="#7a1fd6"/><circle cx="1039" cy="883" r="4.500" fill="#ff8a2a"/><circle cx="1039" cy="883" r="2" fill="#7a3fe0"/>
<!-- chrome -->
<circle cx="1078" cy="875" r="12.300" fill="#e94335"/><path d="M1078 875l-10.650 6.150a12.300 12.300 0 0 0 10.650 6.150l5.300-9.200z" fill="#34a853"/><path d="M1078 875l5.300 3.100-5.300 9.200a12.300 12.300 0 0 0 10.650-18.450h-10.650z" fill="#fbbc05"/><path d="M1067.350 868.850a12.300 12.300 0 0 1 21.300 0h-10.650z" fill="#e94335"/><circle cx="1078" cy="875" r="5.700" fill="#fff"/><circle cx="1078" cy="875" r="4.500" fill="#4285f4"/>
<!-- discord -->
<circle cx="1123.700" cy="876" r="12.200" fill="#5865f2"/><path d="M1116.500 880.500c0-4 1.500-7 2.500-8.500 1.500-.8 3-1 3.500-1l.4.900h1.800l.4-.9c.5 0 2 .2 3.500 1 1 1.500 2.500 4.500 2.500 8.500-1.500 1.200-3.200 1.700-4 1.700l-.8-1.400h-5l-.8 1.400c-.8 0-2.500-.5-4-1.700z" fill="#fff"/><circle cx="1121.300" cy="877.600" r="1.400" fill="#5865f2"/><circle cx="1126.200" cy="877.600" r="1.400" fill="#5865f2"/>
<circle cx="1133.500" cy="863.500" r="6.300" fill="#e8534f"/><circle cx="1133.500" cy="863.500" r="2.300" fill="#fbe9e6"/>
<rect x="1120.500" y="891.700" width="6.500" height="2.500" rx="1.200" fill="#8a8d93"/>
<!-- powerpoint -->
<rect x="1166.500" y="864.500" width="15" height="21" rx="1" fill="#f7e4de" stroke="#d35230" stroke-width="1.200"/><path d="M1173 870.500h6M1173 875h6M1173 879.500h6" stroke="#e0876c" stroke-width="1.300"/><path d="M1157.800 865.300l12-2.600v24.600l-12-2.600z" fill="#d04423"/>
<text x="1160" y="880" font-family="Liberation Sans, sans-serif" font-size="13" font-weight="700" fill="#fff">P</text>
<rect x="1162.500" y="891.700" width="16" height="2.700" rx="1.300" fill="#1a6fd0"/>
<!-- tray -->
<path d="M1293 878.500l5-5 5 5" stroke="#222" stroke-width="1.500"/>
<path d="M1326 881.500h11a3.200 3.200 0 0 0 .500-6.400 5 5 0 0 0-9.600-1.100 3.800 3.800 0 0 0-1.900 7.500z" fill="#7d8188" stroke="#444" stroke-width="1"/>
<path d="M1402.500 872.500a11.500 11.500 0 0 1 16 0M1405 875.500a8 8 0 0 1 11 0M1407.500 878.500a4.500 4.500 0 0 1 6 0" stroke="#222" stroke-width="1.300" stroke-linecap="round"/><circle cx="1410.500" cy="881.500" r="1.300" fill="#222"/>
<path d="M1427 873.500h3l4-3.500v11.500l-4-3.500h-3z" stroke="#222" stroke-width="1.100"/><path d="M1436.500 872.500a4.500 4.500 0 0 1 0 7" stroke="#222" stroke-width="1"/><path d="M1438.500 870a8 8 0 0 1 0 12" stroke="#9a9da3" stroke-width="1"/>
<rect x="1452.500" y="870.500" width="14" height="10" rx="2" stroke="#222" stroke-width="1.200"/><rect x="1454.500" y="872.500" width="7" height="6" rx="1" fill="#222"/><path d="M1468 873.500v4" stroke="#222" stroke-width="1.600" stroke-linecap="round"/>
</svg>

<div class="t" style="left:495.5px;top:867.7px;font-size:14.5px;letter-spacing:-0.495px;color:#444;">Rechercher</div>
<div class="t" style="left:1360.7px;top:868.5px;font-size:11px;letter-spacing:-0.500px;color:#222;">FRA</div>
<div class="t" style="left:1521.2px;top:858.8px;font-size:12px;letter-spacing:-0.183px;color:#222;">14:25</div>
<div class="t" style="left:1486.7px;top:875.6px;font-size:12px;letter-spacing:0.415px;color:#222;">29/03/2023</div>
<div class="t" style="left:1568.0px;top:867.9px;font-size:10.5px;color:#fff;">2</div>
</body>
</html>
